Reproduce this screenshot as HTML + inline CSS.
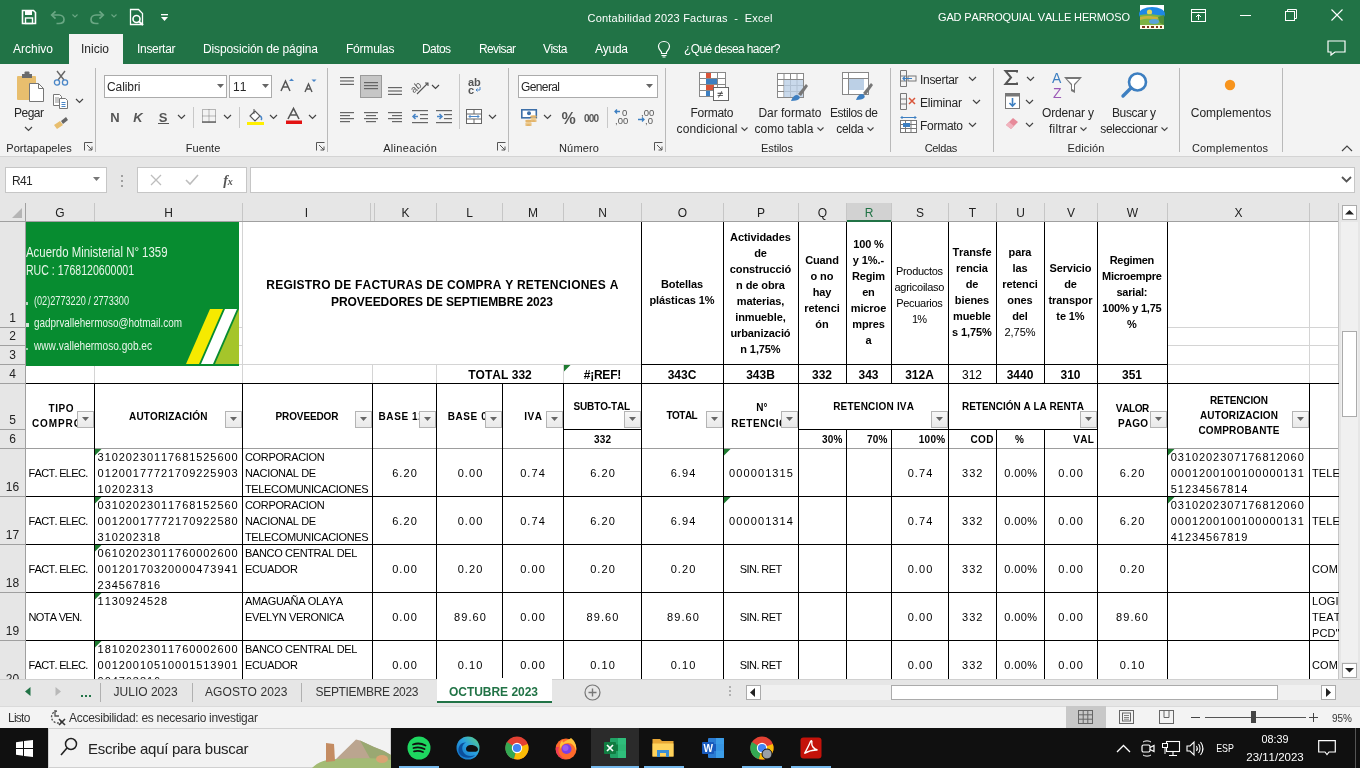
<!DOCTYPE html><html><head><meta charset="utf-8"><style>
html,body{margin:0;padding:0;}
body{width:1360px;height:768px;position:relative;overflow:hidden;background:#fff;font-family:"Liberation Sans",sans-serif;font-kerning:none;}
.a{position:absolute;}
.t{white-space:pre;}
#w{position:absolute;left:0;top:0;width:1360px;height:768px;overflow:hidden;will-change:transform;}
svg{overflow:visible;}
</style></head><body><div id="w">
<div class="a" style="left:0px;top:0px;width:1360px;height:64px;background:#217346;"></div>
<svg class="a" style="left:21px;top:9px;" width="16" height="16" viewBox="0 0 16 16"><path d="M1.5 1.5h11l2 2v11h-13z" fill="none" stroke="#fff" stroke-width="1.6"/><rect x="4" y="1.5" width="7" height="4.5" fill="#fff"/><rect x="4.5" y="9" width="7" height="5.5" fill="none" stroke="#fff" stroke-width="1.4"/></svg>
<svg class="a" style="left:50px;top:10px;" width="16" height="14" viewBox="0 0 16 14"><path d="M2 5 H9 C12 5 14 7 14 9.5 C14 12 12 13.5 9 13.5 H6.5" fill="none" stroke="#6aa784" stroke-width="1.7"/><path d="M5.5 1.3 L1.7 5 L5.5 8.7" fill="none" stroke="#6aa784" stroke-width="1.7"/></svg>
<svg class="a" style="left:72px;top:14px;" width="6" height="4" viewBox="0 0 6 4"><path d="M0.5 0.5 L3 3 L5.5 0.5" fill="none" stroke="#6aa784" stroke-width="1.1"/></svg>
<svg class="a" style="left:89px;top:10px;" width="16" height="14" viewBox="0 0 16 14"><path d="M14 5 H7 C4 5 2 7 2 9.5 C2 12 4 13.5 7 13.5 H9.5" fill="none" stroke="#6aa784" stroke-width="1.7"/><path d="M10.5 1.3 L14.3 5 L10.5 8.7" fill="none" stroke="#6aa784" stroke-width="1.7"/></svg>
<svg class="a" style="left:111px;top:14px;" width="6" height="4" viewBox="0 0 6 4"><path d="M0.5 0.5 L3 3 L5.5 0.5" fill="none" stroke="#6aa784" stroke-width="1.1"/></svg>
<svg class="a" style="left:129px;top:8px;" width="17" height="18" viewBox="0 0 17 18"><path d="M1.5 1.5h8l4 4v11h-12z" fill="none" stroke="#fff" stroke-width="1.3"/><circle cx="7.5" cy="11" r="3.5" fill="none" stroke="#fff" stroke-width="1.6"/><path d="M10 13.5 L14 17" stroke="#fff" stroke-width="2"/></svg>
<svg class="a" style="left:160px;top:13px;" width="9" height="9" viewBox="0 0 9 9"><rect x="1" y="1" width="7" height="1.3" fill="#fff"/><path d="M1 4 h7 l-3.5 4z" fill="#fff"/></svg>
<div class="a t" style="top:13px;font-size:11px;line-height:11px;color:#fff;letter-spacing:0.22px;left:280.11px;width:800px;text-align:center;">Contabilidad 2023 Facturas  -  Excel</div>
<div class="a t" style="top:12px;font-size:11px;line-height:11px;color:#fff;letter-spacing:-0.156px;left:938px;">GAD PARROQUIAL VALLE HERMOSO</div>
<svg class="a" style="left:1140px;top:5px;" width="24" height="24" viewBox="0 0 24 24"><rect width="24" height="24" fill="#fff"/><ellipse cx="12" cy="9" rx="13" ry="7" fill="#1e88e5"/><circle cx="9.5" cy="7" r="2.6" fill="#e3d55a"/><path d="M0 10 C6 8.5 14 9 24 11 V20 H0z" fill="#7cb342"/><path d="M0 12 C6 10.5 12 11 19 12.5 L17 14.5 C10 13.5 5 13.5 0 15z" fill="#c9b33a"/><ellipse cx="14" cy="16.5" rx="5" ry="2.5" fill="#5aa4d8"/><path d="M18 12 L24 10 V20 L20 18z" fill="#4f8f3a"/><rect x="0" y="20" width="24" height="4" fill="#fffbe6"/><path d="M2 21h3v2H2z M7 21h2v2H7z M11 21h3v2h-3z M16 21h2v2h-2z M20 21h2v2h-2z" fill="#7a3a1a"/></svg>
<svg class="a" style="left:1191px;top:9px;" width="15" height="13" viewBox="0 0 15 13"><rect x="0.5" y="0.5" width="14" height="12" fill="none" stroke="#fff"/><path d="M0.5 3.5h14" stroke="#fff"/><path d="M7.5 11 V6 M5 8 L7.5 5.5 L10 8" fill="none" stroke="#fff"/></svg>
<div class="a" style="left:1240px;top:15px;width:11px;height:1px;background:#fff;"></div>
<svg class="a" style="left:1285px;top:9px;" width="12" height="12" viewBox="0 0 12 12"><rect x="0.5" y="2.5" width="9" height="9" fill="none" stroke="#fff"/><path d="M2.5 2.5 V0.5 H11.5 V9.5 H9.5" fill="none" stroke="#fff"/></svg>
<svg class="a" style="left:1331px;top:9px;" width="12" height="12" viewBox="0 0 12 12"><path d="M0.5 0.5 L11.5 11.5 M11.5 0.5 L0.5 11.5" stroke="#fff" stroke-width="1.1"/></svg>
<div class="a" style="left:69px;top:34px;width:54px;height:30px;background:#f3f3f3;"></div>
<div class="a t" style="top:43px;font-size:12px;line-height:12px;color:#fff;left:13px;">Archivo</div>
<div class="a t" style="top:43px;font-size:12px;line-height:12px;color:#262626;left:81px;">Inicio</div>
<div class="a t" style="top:43px;font-size:12px;line-height:12px;color:#fff;letter-spacing:-0.312px;left:137px;">Insertar</div>
<div class="a t" style="top:43px;font-size:12px;line-height:12px;color:#fff;letter-spacing:-0.121px;left:203px;">Disposición de página</div>
<div class="a t" style="top:43px;font-size:12px;line-height:12px;color:#fff;letter-spacing:-0.216px;left:346px;">Fórmulas</div>
<div class="a t" style="top:43px;font-size:12px;line-height:12px;color:#fff;letter-spacing:-0.587px;left:422px;">Datos</div>
<div class="a t" style="top:43px;font-size:12px;line-height:12px;color:#fff;letter-spacing:-0.613px;left:479px;">Revisar</div>
<div class="a t" style="top:43px;font-size:12px;line-height:12px;color:#fff;letter-spacing:-0.544px;left:543px;">Vista</div>
<div class="a t" style="top:43px;font-size:12px;line-height:12px;color:#fff;letter-spacing:-0.256px;left:595px;">Ayuda</div>
<div class="a t" style="top:43px;font-size:12px;line-height:12px;color:#fff;letter-spacing:-0.598px;left:684px;">¿Qué desea hacer?</div>
<svg class="a" style="left:657px;top:40px;" width="14" height="18" viewBox="0 0 14 18"><path d="M7 1.5 C3.5 1.5 1.5 4 1.5 6.5 C1.5 9 3.5 10.5 4.5 12 V13.5 H9.5 V12 C10.5 10.5 12.5 9 12.5 6.5 C12.5 4 10.5 1.5 7 1.5z" fill="none" stroke="#fff" stroke-width="1.2"/><path d="M4.5 15.5h5 M5.5 17h3" stroke="#fff" stroke-width="1.1"/></svg>
<svg class="a" style="left:1327px;top:40px;" width="19" height="16" viewBox="0 0 19 16"><path d="M1 1h17v11H8l-4 3v-3H1z" fill="none" stroke="#fff" stroke-width="1.2"/></svg>
<div class="a" style="left:0px;top:64px;width:1360px;height:92px;background:#f3f3f3;"></div>
<div class="a" style="left:0px;top:156px;width:1360px;height:1px;background:#d4d4d4;"></div>
<div class="a" style="left:95px;top:68px;width:1px;height:84px;background:#b9b9b9;"></div>
<div class="a" style="left:327px;top:68px;width:1px;height:84px;background:#b9b9b9;"></div>
<div class="a" style="left:508px;top:68px;width:1px;height:84px;background:#b9b9b9;"></div>
<div class="a" style="left:665px;top:68px;width:1px;height:84px;background:#b9b9b9;"></div>
<div class="a" style="left:890px;top:68px;width:1px;height:84px;background:#b9b9b9;"></div>
<div class="a" style="left:993px;top:68px;width:1px;height:84px;background:#b9b9b9;"></div>
<div class="a" style="left:1179px;top:68px;width:1px;height:84px;background:#b9b9b9;"></div>
<div class="a" style="left:1282px;top:68px;width:1px;height:84px;background:#b9b9b9;"></div>
<div class="a t" style="top:143px;font-size:11px;line-height:11px;color:#262626;letter-spacing:0.052px;left:-360.97px;width:800px;text-align:center;">Portapapeles</div>
<div class="a t" style="top:143px;font-size:11px;line-height:11px;color:#262626;letter-spacing:0.091px;left:-196.95px;width:800px;text-align:center;">Fuente</div>
<div class="a t" style="top:143px;font-size:11px;line-height:11px;color:#262626;letter-spacing:0.316px;left:10.16px;width:800px;text-align:center;">Alineación</div>
<div class="a t" style="top:143px;font-size:11px;line-height:11px;color:#262626;letter-spacing:0.175px;left:179.09px;width:800px;text-align:center;">Número</div>
<div class="a t" style="top:143px;font-size:11px;line-height:11px;color:#262626;letter-spacing:-0.1px;left:376.95px;width:800px;text-align:center;">Estilos</div>
<div class="a t" style="top:143px;font-size:11px;line-height:11px;color:#262626;letter-spacing:-0.308px;left:540.85px;width:800px;text-align:center;">Celdas</div>
<div class="a t" style="top:143px;font-size:11px;line-height:11px;color:#262626;letter-spacing:0.12px;left:686.06px;width:800px;text-align:center;">Edición</div>
<div class="a t" style="top:143px;font-size:11px;line-height:11px;color:#262626;letter-spacing:0.202px;left:830.1px;width:800px;text-align:center;">Complementos</div>
<svg class="a" style="left:84px;top:142px;" width="9" height="9" viewBox="0 0 9 9"><path d="M0.5 8.5 V0.5 H8.5" fill="none" stroke="#555"/><path d="M3 3 L8 8 M8 4.5 V8 H4.5" fill="none" stroke="#555"/></svg>
<svg class="a" style="left:316px;top:142px;" width="9" height="9" viewBox="0 0 9 9"><path d="M0.5 8.5 V0.5 H8.5" fill="none" stroke="#555"/><path d="M3 3 L8 8 M8 4.5 V8 H4.5" fill="none" stroke="#555"/></svg>
<svg class="a" style="left:497px;top:142px;" width="9" height="9" viewBox="0 0 9 9"><path d="M0.5 8.5 V0.5 H8.5" fill="none" stroke="#555"/><path d="M3 3 L8 8 M8 4.5 V8 H4.5" fill="none" stroke="#555"/></svg>
<svg class="a" style="left:654px;top:142px;" width="9" height="9" viewBox="0 0 9 9"><path d="M0.5 8.5 V0.5 H8.5" fill="none" stroke="#555"/><path d="M3 3 L8 8 M8 4.5 V8 H4.5" fill="none" stroke="#555"/></svg>
<svg class="a" style="left:1341px;top:145px;" width="12" height="7" viewBox="0 0 12 7"><path d="M1 6 L6 1 L11 6" fill="none" stroke="#444" stroke-width="1.2"/></svg>
<svg class="a" style="left:16px;top:71px;" width="30" height="32" viewBox="0 0 30 32"><rect x="1" y="5" width="19" height="24" rx="1" fill="#e8be6e"/><rect x="6" y="3" width="10" height="4" fill="#6b6b6b"/><rect x="8.5" y="0.5" width="5" height="3" rx="1" fill="#6b6b6b"/><path d="M13.5 12.5 h9 l5 5 v13 h-14z" fill="#fff" stroke="#777"/><path d="M22.5 12.5 v5 h5" fill="none" stroke="#777"/></svg>
<div class="a t" style="top:107px;font-size:12px;line-height:12px;color:#262626;letter-spacing:-0.505px;left:-371.25px;width:800px;text-align:center;">Pegar</div>
<svg class="a" style="left:24px;top:126px;" width="9" height="6" viewBox="0 0 9 6"><path d="M1 1 L4.5 4.5 L8 1" fill="none" stroke="#444" stroke-width="1.2"/></svg>
<svg class="a" style="left:53px;top:70px;" width="16" height="16" viewBox="0 0 16 16"><path d="M4 1 L11 10 M12 1 L5 10" stroke="#666" stroke-width="1.4"/><circle cx="4" cy="12.5" r="2.6" fill="none" stroke="#4a86c7" stroke-width="1.3"/><circle cx="12" cy="12.5" r="2.6" fill="none" stroke="#4a86c7" stroke-width="1.3"/></svg>
<svg class="a" style="left:53px;top:94px;" width="16" height="15" viewBox="0 0 16 15"><path d="M0.5 0.5h6l2 2v9h-8z" fill="#fff" stroke="#777"/><path d="M2 4h4M2 6h4M2 8h4" stroke="#777" stroke-width="0.8"/><path d="M6.5 4.5h6l2 2v8h-8z" fill="#fff" stroke="#777"/><path d="M8.5 8.5h4M8.5 10.5h4M8.5 12.5h4" stroke="#4a86c7" stroke-width="1"/></svg>
<svg class="a" style="left:75px;top:98px;" width="9" height="6" viewBox="0 0 9 6"><path d="M1 1 L4.5 4.5 L8 1" fill="none" stroke="#444" stroke-width="1.2"/></svg>
<svg class="a" style="left:53px;top:116px;" width="16" height="14" viewBox="0 0 16 14"><path d="M1 9 L7 5 L10 9 L4 13z" fill="#e8be6e"/><path d="M8 5 L13 1 L15 4 L10 8z" fill="#666"/></svg>
<div class="a" style="left:104px;top:75px;width:123px;height:23px;background:#fff;box-sizing:border-box;border:1px solid #ababab;"></div>
<div class="a t" style="top:81px;font-size:12px;line-height:12px;color:#262626;letter-spacing:-0.085px;left:107px;">Calibri</div>
<svg class="a" style="left:217px;top:84px;" width="8" height="5" viewBox="0 0 8 5"><path d="M0 0h7l-3.5 4z" fill="#666"/></svg>
<div class="a" style="left:229px;top:75px;width:43px;height:23px;background:#fff;box-sizing:border-box;border:1px solid #ababab;"></div>
<div class="a t" style="top:81px;font-size:12px;line-height:12px;color:#262626;left:233px;">11</div>
<svg class="a" style="left:262px;top:84px;" width="8" height="5" viewBox="0 0 8 5"><path d="M0 0h7l-3.5 4z" fill="#666"/></svg>
<svg class="a" style="left:280px;top:78px;" width="14" height="14" viewBox="0 0 14 14"><path d="M1 13 L5.5 3 L10 13 M3 9h5" fill="none" stroke="#555" stroke-width="1.5"/><path d="M9 3 h5 l-2.5 -2.5z" fill="#4a86c7"/></svg>
<svg class="a" style="left:303px;top:79px;" width="14" height="14" viewBox="0 0 14 14"><path d="M2 13 L5.5 5 L9 13 M3.5 10h4" fill="none" stroke="#555" stroke-width="1.4"/><path d="M8.5 0.5 h5 l-2.5 2.5z" fill="#4a86c7"/></svg>
<div class="a t" style="top:111px;font-size:13px;line-height:13px;font-weight:700;color:#555;left:-285.0px;width:800px;text-align:center;">N</div>
<div class="a t" style="top:111px;font-size:13px;line-height:13px;font-weight:700;color:#555;left:-262.0px;width:800px;text-align:center;font-style:italic;">K</div>
<div class="a t" style="top:111px;font-size:13px;line-height:13px;font-weight:700;color:#555;left:-237.0px;width:800px;text-align:center;">S</div>
<div class="a" style="left:158px;top:123px;width:11px;height:1px;background:#555;"></div>
<svg class="a" style="left:177px;top:114px;" width="9" height="6" viewBox="0 0 9 6"><path d="M1 1 L4.5 4.5 L8 1" fill="none" stroke="#444" stroke-width="1.2"/></svg>
<svg class="a" style="left:223px;top:114px;" width="9" height="6" viewBox="0 0 9 6"><path d="M1 1 L4.5 4.5 L8 1" fill="none" stroke="#444" stroke-width="1.2"/></svg>
<svg class="a" style="left:269px;top:114px;" width="9" height="6" viewBox="0 0 9 6"><path d="M1 1 L4.5 4.5 L8 1" fill="none" stroke="#444" stroke-width="1.2"/></svg>
<svg class="a" style="left:308px;top:114px;" width="9" height="6" viewBox="0 0 9 6"><path d="M1 1 L4.5 4.5 L8 1" fill="none" stroke="#444" stroke-width="1.2"/></svg>
<div class="a" style="left:193px;top:107px;width:1px;height:21px;background:#c8c8c8;"></div>
<div class="a" style="left:239px;top:107px;width:1px;height:21px;background:#c8c8c8;"></div>
<svg class="a" style="left:202px;top:109px;" width="14" height="14" viewBox="0 0 14 14"><path d="M0.5 0.5h13v13h-13z M7 0.5v13 M0.5 7h13" fill="none" stroke="#777" stroke-dasharray="1 1"/><path d="M0 13h14" stroke="#666" stroke-width="1.5"/></svg>
<svg class="a" style="left:246px;top:108px;" width="18" height="17" viewBox="0 0 18 17"><path d="M4 8 L9 3 L14 8 L9 13z" fill="#fff" stroke="#555" stroke-width="1.1"/><path d="M8 1 V6" stroke="#555"/><path d="M14 8 C16 9 16 11 15 12" fill="none" stroke="#4a86c7" stroke-width="1.5"/><rect x="1" y="14" width="17" height="3" fill="#ffef00"/></svg>
<svg class="a" style="left:285px;top:107px;" width="18" height="18" viewBox="0 0 18 18"><path d="M3 12 L8.5 1.5 L14 12 M5.2 8h6.6" fill="none" stroke="#555" stroke-width="1.6"/><rect x="1" y="13.5" width="16" height="3.5" fill="#e21212"/></svg>
<svg class="a" style="left:340px;top:77px;" width="16" height="11.2" viewBox="0 0 16 11.2"><rect x="0" y="0.0" width="14" height="1.2" fill="#666"/><rect x="0" y="3.4" width="14" height="1.2" fill="#666"/><rect x="0" y="6.8" width="14" height="1.2" fill="#666"/></svg>
<div class="a" style="left:360px;top:75px;width:22px;height:23px;background:#c6c6c6;box-sizing:border-box;border:1px solid #9a9a9a;"></div>
<svg class="a" style="left:364px;top:82px;" width="16" height="10" viewBox="0 0 16 10"><rect x="0" y="0" width="14" height="1.2" fill="#666"/><rect x="0" y="3" width="14" height="1.2" fill="#666"/><rect x="0" y="6" width="14" height="1.2" fill="#666"/></svg>
<svg class="a" style="left:388px;top:87px;" width="16" height="11.2" viewBox="0 0 16 11.2"><rect x="0" y="0.0" width="14" height="1.2" fill="#666"/><rect x="0" y="3.4" width="14" height="1.2" fill="#666"/><rect x="0" y="6.8" width="14" height="1.2" fill="#666"/></svg>
<svg class="a" style="left:411px;top:78px;" width="22" height="18" viewBox="0 0 22 18"><text x="0" y="12" font-size="10" font-family="Liberation Sans" fill="#555" transform="rotate(-40 6 10)">ab</text><path d="M6 16 L17 5 M14 5 h3 v3" fill="none" stroke="#555" stroke-width="1.1"/></svg>
<svg class="a" style="left:431px;top:84px;" width="9" height="6" viewBox="0 0 9 6"><path d="M1 1 L4.5 4.5 L8 1" fill="none" stroke="#444" stroke-width="1.2"/></svg>
<svg class="a" style="left:340px;top:112px;" width="16" height="13" viewBox="0 0 16 13"><rect x="0" y="0" width="14" height="1.2" fill="#666"/><rect x="0" y="3" width="10" height="1.2" fill="#666"/><rect x="0" y="6" width="14" height="1.2" fill="#666"/><rect x="0" y="9" width="10" height="1.2" fill="#666"/></svg>
<svg class="a" style="left:364px;top:112px;" width="16" height="13" viewBox="0 0 16 13"><rect x="0" y="0" width="14" height="1.2" fill="#666"/><rect x="2" y="3" width="10" height="1.2" fill="#666"/><rect x="0" y="6" width="14" height="1.2" fill="#666"/><rect x="2" y="9" width="10" height="1.2" fill="#666"/></svg>
<svg class="a" style="left:388px;top:112px;" width="16" height="13" viewBox="0 0 16 13"><rect x="0" y="0" width="14" height="1.2" fill="#666"/><rect x="4" y="3" width="10" height="1.2" fill="#666"/><rect x="0" y="6" width="14" height="1.2" fill="#666"/><rect x="4" y="9" width="10" height="1.2" fill="#666"/></svg>
<svg class="a" style="left:412px;top:109px;" width="16" height="16" viewBox="0 0 16 16"><rect x="0" y="1" width="16" height="1.2" fill="#666"/><rect x="8" y="5" width="8" height="1.2" fill="#666"/><rect x="8" y="9" width="8" height="1.2" fill="#666"/><rect x="0" y="13" width="16" height="1.2" fill="#666"/><path d="M6 7.5 H1 M3.5 5 L1 7.5 L3.5 10" fill="none" stroke="#4a86c7" stroke-width="1.5"/></svg>
<svg class="a" style="left:436px;top:109px;" width="16" height="16" viewBox="0 0 16 16"><rect x="0" y="1" width="16" height="1.2" fill="#666"/><rect x="8" y="5" width="8" height="1.2" fill="#666"/><rect x="8" y="9" width="8" height="1.2" fill="#666"/><rect x="0" y="13" width="16" height="1.2" fill="#666"/><path d="M1 7.5 H6 M3.5 5 L6 7.5 L3.5 10" fill="none" stroke="#4a86c7" stroke-width="1.5"/></svg>
<div class="a" style="left:459px;top:74px;width:1px;height:55px;background:#c8c8c8;"></div>
<svg class="a" style="left:468px;top:77px;" width="16" height="17" viewBox="0 0 16 17"><text x="0" y="8.5" font-size="11" font-weight="bold" font-family="Liberation Sans" fill="#555">ab</text><text x="0" y="16.5" font-size="11" font-weight="bold" font-family="Liberation Sans" fill="#555">c</text><path d="M12 10 V13 H8 M9.5 11.5 L8 13 L9.5 14.5" fill="none" stroke="#4a86c7"/></svg>
<svg class="a" style="left:466px;top:109px;" width="16" height="15" viewBox="0 0 16 15"><rect x="0.5" y="0.5" width="15" height="14" fill="#fff" stroke="#666"/><path d="M0.5 5h15 M0.5 10h15 M8 0.5v4.5 M8 10v4.5" stroke="#666"/><path d="M3 7.5 h10 M4.5 6 L3 7.5 L4.5 9 M11.5 6 L13 7.5 L11.5 9" fill="none" stroke="#4a86c7"/></svg>
<svg class="a" style="left:488px;top:114px;" width="9" height="6" viewBox="0 0 9 6"><path d="M1 1 L4.5 4.5 L8 1" fill="none" stroke="#444" stroke-width="1.2"/></svg>
<div class="a" style="left:518px;top:75px;width:140px;height:23px;background:#fff;box-sizing:border-box;border:1px solid #ababab;"></div>
<div class="a t" style="top:81px;font-size:12px;line-height:12px;color:#262626;letter-spacing:-0.615px;left:521px;">General</div>
<svg class="a" style="left:646px;top:84px;" width="8" height="5" viewBox="0 0 8 5"><path d="M0 0h7l-3.5 4z" fill="#666"/></svg>
<svg class="a" style="left:520px;top:108px;" width="18" height="18" viewBox="0 0 18 18"><rect x="1.8" y="1.8" width="14.5" height="8" fill="#fff" stroke="#3d6fa8" stroke-width="1.6"/><circle cx="9" cy="5.2" r="2" fill="#3d6fa8"/><ellipse cx="13.5" cy="8.5" rx="3.3" ry="1.3" fill="#e3b46a"/><ellipse cx="13.5" cy="10.8" rx="3.3" ry="1.2" fill="#ecc98e"/><ellipse cx="13.5" cy="13" rx="3.3" ry="1.1" fill="#e3b46a"/><ellipse cx="8.5" cy="13" rx="3.3" ry="1.3" fill="#e3b46a"/><ellipse cx="8.5" cy="15.2" rx="3.3" ry="1.2" fill="#ecc98e"/><ellipse cx="8.5" cy="17" rx="3.3" ry="1.1" fill="#e3b46a"/></svg>
<svg class="a" style="left:543px;top:114px;" width="9" height="6" viewBox="0 0 9 6"><path d="M1 1 L4.5 4.5 L8 1" fill="none" stroke="#444" stroke-width="1.2"/></svg>
<div class="a t" style="top:111px;font-size:16px;line-height:16px;font-weight:700;color:#555;letter-spacing:-1.227px;left:167.89px;width:800px;text-align:center;">%</div>
<div class="a t" style="top:114px;font-size:10px;line-height:10px;font-weight:700;color:#555;letter-spacing:-0.842px;left:191.08px;width:800px;text-align:center;">000</div>
<div class="a" style="left:607px;top:107px;width:1px;height:21px;background:#c8c8c8;"></div>
<svg class="a" style="left:614px;top:108px;" width="16" height="16" viewBox="0 0 16 16"><text x="8" y="8" font-size="9.5" font-family="Liberation Sans" fill="#555">0</text><text x="1" y="16" font-size="9.5" font-family="Liberation Sans" fill="#555">,00</text><path d="M6 3.5 H1 M3 1.5 L1 3.5 L3 5.5" fill="none" stroke="#3d7fc1" stroke-width="1.3"/></svg>
<svg class="a" style="left:637px;top:108px;" width="16" height="16" viewBox="0 0 16 16"><text x="4" y="8" font-size="9.5" font-family="Liberation Sans" fill="#555">,00</text><text x="8" y="16" font-size="9.5" font-family="Liberation Sans" fill="#555">,0</text><path d="M1 11.5 H7 M5 9.5 L7 11.5 L5 13.5" fill="none" stroke="#3d7fc1" stroke-width="1.3"/></svg>
<svg class="a" style="left:699px;top:72px;" width="30" height="30" viewBox="0 0 30 30"><rect x="0.5" y="0.5" width="26" height="24" fill="#fff" stroke="#888"/><path d="M0.5 6.5h26" stroke="#888"/><path d="M0.5 12.5h26" stroke="#888"/><path d="M0.5 18.5h26" stroke="#888"/><path d="M9.5 0.5v24" stroke="#888"/><path d="M18.5 0.5v24" stroke="#888"/><rect x="7" y="1" width="5" height="5" fill="#d9553a"/><rect x="7" y="7" width="11" height="5" fill="#3d7fc1"/><rect x="7" y="13" width="8" height="5" fill="#d9553a"/><rect x="7" y="19" width="4" height="5" fill="#3d7fc1"/><rect x="14.5" y="15.5" width="15" height="13" fill="#fff" stroke="#666"/><text x="18" y="26" font-size="11" font-family="Liberation Sans" fill="#333">≠</text></svg>
<svg class="a" style="left:777px;top:73px;" width="32" height="30" viewBox="0 0 32 30"><rect x="0.5" y="0.5" width="26" height="24" fill="#fff" stroke="#888"/><path d="M0.5 6.5h26" stroke="#888"/><path d="M0.5 12.5h26" stroke="#888"/><path d="M0.5 18.5h26" stroke="#888"/><path d="M7.0 0.5v24" stroke="#888"/><path d="M13.5 0.5v24" stroke="#888"/><path d="M20.0 0.5v24" stroke="#888"/><rect x="7" y="7" width="19" height="17" fill="#bcd0e6" opacity="0.8"/><path d="M14 28 C16 22 20 21 22 23 C24 25 22 28 14 28z" fill="#3d7fc1"/><path d="M21 21 L29 11 L31 13 L24 23z" fill="#777"/></svg>
<svg class="a" style="left:842px;top:72px;" width="32" height="30" viewBox="0 0 32 30"><rect x="0.5" y="0.5" width="26" height="22" fill="#fff" stroke="#888"/><rect x="6" y="6" width="16" height="12" fill="#bcd0e6"/><path d="M0.5 6.5h26 M6.5 0.5v22" stroke="#888"/><path d="M14 28 C16 22 20 21 22 23 C24 25 22 28 14 28z" fill="#3d7fc1"/><path d="M21 21 L29 11 L31 13 L24 23z" fill="#777"/></svg>
<div class="a t" style="top:107px;font-size:12px;line-height:12px;color:#262626;letter-spacing:-0.28px;left:311.86px;width:800px;text-align:center;">Formato</div>
<div class="a t" style="top:123px;font-size:12px;line-height:12px;color:#262626;letter-spacing:0.076px;left:307.04px;width:800px;text-align:center;">condicional</div>
<div class="a t" style="top:107px;font-size:12px;line-height:12px;color:#262626;letter-spacing:-0.035px;left:389.98px;width:800px;text-align:center;">Dar formato</div>
<div class="a t" style="top:123px;font-size:12px;line-height:12px;color:#262626;letter-spacing:0.011px;left:384.01px;width:800px;text-align:center;">como tabla</div>
<div class="a t" style="top:107px;font-size:12px;line-height:12px;color:#262626;letter-spacing:-0.447px;left:453.78px;width:800px;text-align:center;">Estilos de</div>
<div class="a t" style="top:123px;font-size:12px;line-height:12px;color:#262626;letter-spacing:-0.297px;left:449.85px;width:800px;text-align:center;">celda</div>
<svg class="a" style="left:741px;top:127px;" width="7" height="5" viewBox="0 0 7 5"><path d="M0.5 0.5 L3.5 3.5 L6.5 0.5" fill="none" stroke="#444" stroke-width="1.1"/></svg>
<svg class="a" style="left:817px;top:127px;" width="7" height="5" viewBox="0 0 7 5"><path d="M0.5 0.5 L3.5 3.5 L6.5 0.5" fill="none" stroke="#444" stroke-width="1.1"/></svg>
<svg class="a" style="left:867px;top:127px;" width="7" height="5" viewBox="0 0 7 5"><path d="M0.5 0.5 L3.5 3.5 L6.5 0.5" fill="none" stroke="#444" stroke-width="1.1"/></svg>
<svg class="a" style="left:900px;top:70px;" width="17" height="17" viewBox="0 0 17 17"><path d="M0.5 0.5h6v16h-6z M0.5 6h6 M0.5 11h6" fill="none" stroke="#777"/><rect x="8" y="6" width="8" height="5" fill="none" stroke="#777"/><path d="M12 8.5 H3 M5 6.5 L3 8.5 L5 10.5" fill="none" stroke="#3d7fc1" stroke-width="1.2"/></svg>
<div class="a t" style="top:74px;font-size:12px;line-height:12px;color:#262626;letter-spacing:-0.297px;left:920px;">Insertar</div>
<svg class="a" style="left:900px;top:93px;" width="17" height="17" viewBox="0 0 17 17"><path d="M0.5 0.5h6v16h-6z M0.5 6h6 M0.5 11h6" fill="none" stroke="#777"/><path d="M9 5 L15 11 M15 5 L9 11" stroke="#d9553a" stroke-width="1.5"/></svg>
<div class="a t" style="top:97px;font-size:12px;line-height:12px;color:#262626;letter-spacing:-0.192px;left:920px;">Eliminar</div>
<svg class="a" style="left:900px;top:116px;" width="17" height="17" viewBox="0 0 17 17"><path d="M0.5 1.5h16 M2 0v3 M15 0v3" stroke="#3d7fc1"/><rect x="0.5" y="4.5" width="16" height="12" fill="#fff" stroke="#777"/><path d="M0.5 8.5h16 M0.5 12.5h16 M5.5 4.5v12 M11 4.5v12" stroke="#777"/><rect x="3" y="7" width="7" height="4" fill="#3d7fc1"/></svg>
<div class="a t" style="top:120px;font-size:12px;line-height:12px;color:#262626;letter-spacing:-0.28px;left:920px;">Formato</div>
<svg class="a" style="left:968px;top:76px;" width="9" height="6" viewBox="0 0 9 6"><path d="M1 1 L4.5 4.5 L8 1" fill="none" stroke="#444" stroke-width="1.2"/></svg>
<svg class="a" style="left:972px;top:99px;" width="9" height="6" viewBox="0 0 9 6"><path d="M1 1 L4.5 4.5 L8 1" fill="none" stroke="#444" stroke-width="1.2"/></svg>
<svg class="a" style="left:968px;top:122px;" width="9" height="6" viewBox="0 0 9 6"><path d="M1 1 L4.5 4.5 L8 1" fill="none" stroke="#444" stroke-width="1.2"/></svg>
<svg class="a" style="left:1004px;top:70px;" width="14" height="15" viewBox="0 0 14 15"><path d="M13 2.5 V1 H1.5 L7 7.5 L1.5 14 H13 V12.5" fill="none" stroke="#555" stroke-width="2"/></svg>
<svg class="a" style="left:1005px;top:93px;" width="15" height="16" viewBox="0 0 15 16"><rect x="0.5" y="0.5" width="14" height="15" fill="#fff" stroke="#777"/><rect x="0.5" y="0.5" width="14" height="3" fill="#777"/><path d="M7.5 5 V13 M4.5 10 L7.5 13 L10.5 10" fill="none" stroke="#3d7fc1" stroke-width="1.6"/></svg>
<svg class="a" style="left:1005px;top:117px;" width="15" height="12" viewBox="0 0 15 12"><path d="M1 8 L8 1 L13 5 L6 12z" fill="#e78a9a"/><path d="M1 8 L4 5 L9 9 L6 12z" fill="#f0b3be"/></svg>
<svg class="a" style="left:1026px;top:76px;" width="9" height="6" viewBox="0 0 9 6"><path d="M1 1 L4.5 4.5 L8 1" fill="none" stroke="#444" stroke-width="1.2"/></svg>
<svg class="a" style="left:1025px;top:99px;" width="9" height="6" viewBox="0 0 9 6"><path d="M1 1 L4.5 4.5 L8 1" fill="none" stroke="#444" stroke-width="1.2"/></svg>
<svg class="a" style="left:1025px;top:122px;" width="9" height="6" viewBox="0 0 9 6"><path d="M1 1 L4.5 4.5 L8 1" fill="none" stroke="#444" stroke-width="1.2"/></svg>
<svg class="a" style="left:1052px;top:71px;" width="32" height="29" viewBox="0 0 32 29"><text x="0" y="12" font-size="14" font-family="Liberation Sans" fill="#3d7fc1">A</text><text x="1" y="27" font-size="14" font-family="Liberation Sans" fill="#9b59b6">Z</text><path d="M12 6 H30 L23 14 V22 L19 20 V14z" fill="#777"/><path d="M15 8 H27 L22 13 V19 L20 18 V13z" fill="#fff"/></svg>
<div class="a t" style="top:107px;font-size:12px;line-height:12px;color:#262626;letter-spacing:-0.169px;left:667.92px;width:800px;text-align:center;">Ordenar y</div>
<div class="a t" style="top:123px;font-size:12px;line-height:12px;color:#262626;letter-spacing:0.222px;left:663.11px;width:800px;text-align:center;">filtrar</div>
<svg class="a" style="left:1120px;top:71px;" width="29" height="29" viewBox="0 0 29 29"><circle cx="17.5" cy="11" r="8.5" fill="#fff" stroke="#3d7fc1" stroke-width="2.6"/><path d="M11 17 L3 25" stroke="#3d7fc1" stroke-width="3.4" stroke-linecap="round"/></svg>
<div class="a t" style="top:107px;font-size:12px;line-height:12px;color:#262626;letter-spacing:-0.383px;left:733.81px;width:800px;text-align:center;">Buscar y</div>
<div class="a t" style="top:123px;font-size:12px;line-height:12px;color:#262626;letter-spacing:-0.33px;left:728.84px;width:800px;text-align:center;">seleccionar</div>
<svg class="a" style="left:1080px;top:127px;" width="7" height="5" viewBox="0 0 7 5"><path d="M0.5 0.5 L3.5 3.5 L6.5 0.5" fill="none" stroke="#444" stroke-width="1.1"/></svg>
<svg class="a" style="left:1161px;top:127px;" width="7" height="5" viewBox="0 0 7 5"><path d="M0.5 0.5 L3.5 3.5 L6.5 0.5" fill="none" stroke="#444" stroke-width="1.1"/></svg>
<svg class="a" style="left:1224px;top:79px;" width="12" height="12" viewBox="0 0 12 12"><circle cx="6" cy="6" r="5.2" fill="#f7941d"/></svg>
<div class="a t" style="top:107px;font-size:12px;line-height:12px;color:#262626;letter-spacing:-0.036px;left:830.98px;width:800px;text-align:center;">Complementos</div>
<div class="a" style="left:0px;top:157px;width:1360px;height:46px;background:#e6e6e6;"></div>
<div class="a" style="left:5px;top:167px;width:102px;height:26px;background:#fff;box-sizing:border-box;border:1px solid #c6c6c6;"></div>
<div class="a t" style="top:175px;font-size:12px;line-height:12px;color:#262626;letter-spacing:-0.657px;left:12px;">R41</div>
<svg class="a" style="left:93px;top:177px;" width="8" height="5" viewBox="0 0 8 5"><path d="M0 0h7l-3.5 4z" fill="#777"/></svg>
<div class="a" style="left:121px;top:175px;width:2px;height:2px;background:#a0a0a0;"></div>
<div class="a" style="left:121px;top:180px;width:2px;height:2px;background:#a0a0a0;"></div>
<div class="a" style="left:121px;top:185px;width:2px;height:2px;background:#a0a0a0;"></div>
<div class="a" style="left:137px;top:167px;width:110px;height:26px;background:#fff;box-sizing:border-box;border:1px solid #c6c6c6;"></div>
<svg class="a" style="left:150px;top:174px;" width="12" height="12" viewBox="0 0 12 12"><path d="M1 1 L11 11 M11 1 L1 11" stroke="#bdbdbd" stroke-width="1.3"/></svg>
<svg class="a" style="left:185px;top:174px;" width="14" height="12" viewBox="0 0 14 12"><path d="M1 6 L5 10 L13 1" fill="none" stroke="#bdbdbd" stroke-width="1.6"/></svg>
<div class="a t" style="top:174px;font-size:14px;line-height:14px;font-family:'Liberation Serif';font-weight:700;color:#555;left:-172.0px;width:800px;text-align:center;"><i>f</i><span style="font-size:10px"><i>x</i></span></div>
<div class="a" style="left:250px;top:167px;width:1105px;height:26px;background:#fff;box-sizing:border-box;border:1px solid #c6c6c6;"></div>
<svg class="a" style="left:1341px;top:176px;" width="11" height="7" viewBox="0 0 11 7"><path d="M1 1 L5.5 5.5 L10 1" fill="none" stroke="#555" stroke-width="1.8"/></svg>
<div class="a" style="left:0px;top:203px;width:1339px;height:18px;background:#e6e6e6;"></div>
<div class="a" style="left:847px;top:203px;width:44px;height:18px;background:#d2d2d2;"></div>
<div class="a" style="left:0px;top:221px;width:1339px;height:1px;background:#a0a0a0;"></div>
<div class="a" style="left:847px;top:220px;width:44px;height:2px;background:#217346;"></div>
<div class="a" style="left:25px;top:203px;width:1px;height:18px;background:#c6c6c6;"></div>
<div class="a" style="left:94px;top:203px;width:1px;height:18px;background:#c6c6c6;"></div>
<div class="a" style="left:242px;top:203px;width:1px;height:18px;background:#c6c6c6;"></div>
<div class="a" style="left:370px;top:203px;width:1px;height:18px;background:#c6c6c6;"></div>
<div class="a" style="left:374px;top:203px;width:1px;height:18px;background:#c6c6c6;"></div>
<div class="a" style="left:436px;top:203px;width:1px;height:18px;background:#c6c6c6;"></div>
<div class="a" style="left:502px;top:203px;width:1px;height:18px;background:#c6c6c6;"></div>
<div class="a" style="left:563px;top:203px;width:1px;height:18px;background:#c6c6c6;"></div>
<div class="a" style="left:641px;top:203px;width:1px;height:18px;background:#c6c6c6;"></div>
<div class="a" style="left:723px;top:203px;width:1px;height:18px;background:#c6c6c6;"></div>
<div class="a" style="left:798px;top:203px;width:1px;height:18px;background:#c6c6c6;"></div>
<div class="a" style="left:846px;top:203px;width:1px;height:18px;background:#c6c6c6;"></div>
<div class="a" style="left:891px;top:203px;width:1px;height:18px;background:#c6c6c6;"></div>
<div class="a" style="left:948px;top:203px;width:1px;height:18px;background:#c6c6c6;"></div>
<div class="a" style="left:996px;top:203px;width:1px;height:18px;background:#c6c6c6;"></div>
<div class="a" style="left:1044px;top:203px;width:1px;height:18px;background:#c6c6c6;"></div>
<div class="a" style="left:1097px;top:203px;width:1px;height:18px;background:#c6c6c6;"></div>
<div class="a" style="left:1167px;top:203px;width:1px;height:18px;background:#c6c6c6;"></div>
<div class="a" style="left:1309px;top:203px;width:1px;height:18px;background:#c6c6c6;"></div>
<svg class="a" style="left:11px;top:207px;" width="12" height="12" viewBox="0 0 12 12"><path d="M11 1 V11 H1z" fill="#b5b5b5"/></svg>
<div class="a t" style="top:207px;font-size:12px;line-height:12px;color:#222;left:-340.0px;width:800px;text-align:center;">G</div>
<div class="a t" style="top:207px;font-size:12px;line-height:12px;color:#222;left:-231.5px;width:800px;text-align:center;">H</div>
<div class="a t" style="top:207px;font-size:12px;line-height:12px;color:#222;left:-93.5px;width:800px;text-align:center;">I</div>
<div class="a t" style="top:207px;font-size:12px;line-height:12px;color:#222;left:5.5px;width:800px;text-align:center;">K</div>
<div class="a t" style="top:207px;font-size:12px;line-height:12px;color:#222;left:69.5px;width:800px;text-align:center;">L</div>
<div class="a t" style="top:207px;font-size:12px;line-height:12px;color:#222;left:133.0px;width:800px;text-align:center;">M</div>
<div class="a t" style="top:207px;font-size:12px;line-height:12px;color:#222;left:202.5px;width:800px;text-align:center;">N</div>
<div class="a t" style="top:207px;font-size:12px;line-height:12px;color:#222;left:282.5px;width:800px;text-align:center;">O</div>
<div class="a t" style="top:207px;font-size:12px;line-height:12px;color:#222;left:361.0px;width:800px;text-align:center;">P</div>
<div class="a t" style="top:207px;font-size:12px;line-height:12px;color:#222;left:422.5px;width:800px;text-align:center;">Q</div>
<div class="a t" style="top:207px;font-size:12px;line-height:12px;color:#217346;left:469.0px;width:800px;text-align:center;">R</div>
<div class="a t" style="top:207px;font-size:12px;line-height:12px;color:#222;left:520.0px;width:800px;text-align:center;">S</div>
<div class="a t" style="top:207px;font-size:12px;line-height:12px;color:#222;left:572.5px;width:800px;text-align:center;">T</div>
<div class="a t" style="top:207px;font-size:12px;line-height:12px;color:#222;left:620.5px;width:800px;text-align:center;">U</div>
<div class="a t" style="top:207px;font-size:12px;line-height:12px;color:#222;left:671.0px;width:800px;text-align:center;">V</div>
<div class="a t" style="top:207px;font-size:12px;line-height:12px;color:#222;left:732.5px;width:800px;text-align:center;">W</div>
<div class="a t" style="top:207px;font-size:12px;line-height:12px;color:#222;left:838.5px;width:800px;text-align:center;">X</div>
<div class="a" style="left:26px;top:222px;width:1313px;height:457px;background:#fff;"></div>
<div class="a" style="left:0px;top:222px;width:25px;height:457px;background:#e6e6e6;"></div>
<div class="a" style="left:25px;top:203px;width:1px;height:476px;background:#a0a0a0;"></div>
<div class="a" style="left:0px;top:327px;width:25px;height:1px;background:#a0a0a0;"></div>
<div class="a" style="left:26px;top:327px;width:1313px;height:1px;background:#d4d4d4;"></div>
<div class="a t" style="top:312px;font-size:12px;line-height:12px;color:#222;left:-387.5px;width:800px;text-align:center;">1</div>
<div class="a" style="left:0px;top:345px;width:25px;height:1px;background:#a0a0a0;"></div>
<div class="a" style="left:26px;top:345px;width:1313px;height:1px;background:#d4d4d4;"></div>
<div class="a t" style="top:330px;font-size:12px;line-height:12px;color:#222;left:-387.5px;width:800px;text-align:center;">2</div>
<div class="a" style="left:0px;top:364px;width:25px;height:1px;background:#a0a0a0;"></div>
<div class="a" style="left:26px;top:364px;width:1313px;height:1px;background:#d4d4d4;"></div>
<div class="a t" style="top:349px;font-size:12px;line-height:12px;color:#222;left:-387.5px;width:800px;text-align:center;">3</div>
<div class="a" style="left:0px;top:383px;width:25px;height:1px;background:#a0a0a0;"></div>
<div class="a" style="left:26px;top:383px;width:1313px;height:1px;background:#d4d4d4;"></div>
<div class="a t" style="top:368px;font-size:12px;line-height:12px;color:#222;left:-387.5px;width:800px;text-align:center;">4</div>
<div class="a" style="left:0px;top:429px;width:25px;height:1px;background:#a0a0a0;"></div>
<div class="a" style="left:26px;top:429px;width:1313px;height:1px;background:#d4d4d4;"></div>
<div class="a t" style="top:414px;font-size:12px;line-height:12px;color:#222;left:-387.5px;width:800px;text-align:center;">5</div>
<div class="a" style="left:0px;top:448px;width:25px;height:1px;background:#a0a0a0;"></div>
<div class="a" style="left:26px;top:448px;width:1313px;height:1px;background:#9d9d9d;"></div>
<div class="a t" style="top:433px;font-size:12px;line-height:12px;color:#222;left:-387.5px;width:800px;text-align:center;">6</div>
<div class="a" style="left:0px;top:496px;width:25px;height:1px;background:#a0a0a0;"></div>
<div class="a" style="left:26px;top:496px;width:1313px;height:1px;background:#d4d4d4;"></div>
<div class="a t" style="top:481px;font-size:12px;line-height:12px;color:#222;left:-387.5px;width:800px;text-align:center;">16</div>
<div class="a" style="left:0px;top:544px;width:25px;height:1px;background:#a0a0a0;"></div>
<div class="a" style="left:26px;top:544px;width:1313px;height:1px;background:#d4d4d4;"></div>
<div class="a t" style="top:529px;font-size:12px;line-height:12px;color:#222;left:-387.5px;width:800px;text-align:center;">17</div>
<div class="a" style="left:0px;top:592px;width:25px;height:1px;background:#a0a0a0;"></div>
<div class="a" style="left:26px;top:592px;width:1313px;height:1px;background:#d4d4d4;"></div>
<div class="a t" style="top:577px;font-size:12px;line-height:12px;color:#222;left:-387.5px;width:800px;text-align:center;">18</div>
<div class="a" style="left:0px;top:640px;width:25px;height:1px;background:#a0a0a0;"></div>
<div class="a" style="left:26px;top:640px;width:1313px;height:1px;background:#d4d4d4;"></div>
<div class="a t" style="top:625px;font-size:12px;line-height:12px;color:#222;left:-387.5px;width:800px;text-align:center;">19</div>
<div class="a t" style="top:673px;font-size:12px;line-height:12px;color:#222;left:-387.5px;width:800px;text-align:center;">20</div>
<div class="a" style="left:94px;top:222px;width:1px;height:457px;background:#d4d4d4;"></div>
<div class="a" style="left:242px;top:222px;width:1px;height:457px;background:#d4d4d4;"></div>
<div class="a" style="left:372px;top:222px;width:1px;height:457px;background:#d4d4d4;"></div>
<div class="a" style="left:436px;top:222px;width:1px;height:457px;background:#d4d4d4;"></div>
<div class="a" style="left:502px;top:222px;width:1px;height:457px;background:#d4d4d4;"></div>
<div class="a" style="left:563px;top:222px;width:1px;height:457px;background:#d4d4d4;"></div>
<div class="a" style="left:641px;top:222px;width:1px;height:457px;background:#d4d4d4;"></div>
<div class="a" style="left:723px;top:222px;width:1px;height:457px;background:#d4d4d4;"></div>
<div class="a" style="left:798px;top:222px;width:1px;height:457px;background:#d4d4d4;"></div>
<div class="a" style="left:846px;top:222px;width:1px;height:457px;background:#d4d4d4;"></div>
<div class="a" style="left:891px;top:222px;width:1px;height:457px;background:#d4d4d4;"></div>
<div class="a" style="left:948px;top:222px;width:1px;height:457px;background:#d4d4d4;"></div>
<div class="a" style="left:996px;top:222px;width:1px;height:457px;background:#d4d4d4;"></div>
<div class="a" style="left:1044px;top:222px;width:1px;height:457px;background:#d4d4d4;"></div>
<div class="a" style="left:1097px;top:222px;width:1px;height:457px;background:#d4d4d4;"></div>
<div class="a" style="left:1167px;top:222px;width:1px;height:457px;background:#d4d4d4;"></div>
<div class="a" style="left:1309px;top:222px;width:1px;height:457px;background:#d4d4d4;"></div>
<div class="a" style="left:1338px;top:203px;width:1px;height:476px;background:#c6c6c6;"></div>
<div class="a" style="left:243px;top:222px;width:398px;height:142px;background:#fff;"></div>
<div class="a" style="left:642px;top:222px;width:81px;height:142px;background:#fff;"></div>
<div class="a" style="left:724px;top:222px;width:74px;height:142px;background:#fff;"></div>
<div class="a" style="left:799px;top:222px;width:47px;height:142px;background:#fff;"></div>
<div class="a" style="left:847px;top:222px;width:44px;height:142px;background:#fff;"></div>
<div class="a" style="left:892px;top:222px;width:56px;height:142px;background:#fff;"></div>
<div class="a" style="left:949px;top:222px;width:47px;height:142px;background:#fff;"></div>
<div class="a" style="left:997px;top:222px;width:47px;height:142px;background:#fff;"></div>
<div class="a" style="left:1045px;top:222px;width:52px;height:142px;background:#fff;"></div>
<div class="a" style="left:1098px;top:222px;width:69px;height:142px;background:#fff;"></div>
<div class="a" style="left:437px;top:365px;width:126px;height:18px;background:#fff;"></div>
<div class="a" style="left:26px;top:384px;width:68px;height:64px;background:#fff;"></div>
<div class="a" style="left:95px;top:384px;width:147px;height:64px;background:#fff;"></div>
<div class="a" style="left:243px;top:384px;width:129px;height:64px;background:#fff;"></div>
<div class="a" style="left:373px;top:384px;width:63px;height:64px;background:#fff;"></div>
<div class="a" style="left:437px;top:384px;width:65px;height:64px;background:#fff;"></div>
<div class="a" style="left:503px;top:384px;width:60px;height:64px;background:#fff;"></div>
<div class="a" style="left:642px;top:384px;width:81px;height:64px;background:#fff;"></div>
<div class="a" style="left:724px;top:384px;width:74px;height:64px;background:#fff;"></div>
<div class="a" style="left:1098px;top:384px;width:69px;height:64px;background:#fff;"></div>
<div class="a" style="left:1168px;top:384px;width:141px;height:64px;background:#fff;"></div>
<div class="a" style="left:1310px;top:384px;width:28px;height:64px;background:#fff;"></div>
<div class="a" style="left:564px;top:384px;width:77px;height:45px;background:#fff;"></div>
<div class="a" style="left:799px;top:384px;width:149px;height:45px;background:#fff;"></div>
<div class="a" style="left:949px;top:384px;width:148px;height:45px;background:#fff;"></div>
<div class="a" style="left:641px;top:364px;width:527px;height:1px;background:#000;"></div>
<div class="a" style="left:26px;top:383px;width:1313px;height:1px;background:#000;"></div>
<div class="a" style="left:563px;top:429px;width:79px;height:1px;background:#000;"></div>
<div class="a" style="left:798px;top:429px;width:300px;height:1px;background:#000;"></div>
<div class="a" style="left:26px;top:496px;width:1313px;height:1px;background:#000;"></div>
<div class="a" style="left:26px;top:544px;width:1313px;height:1px;background:#000;"></div>
<div class="a" style="left:26px;top:592px;width:1313px;height:1px;background:#000;"></div>
<div class="a" style="left:26px;top:640px;width:1313px;height:1px;background:#000;"></div>
<div class="a" style="left:641px;top:222px;width:1px;height:162px;background:#000;"></div>
<div class="a" style="left:723px;top:222px;width:1px;height:162px;background:#000;"></div>
<div class="a" style="left:798px;top:222px;width:1px;height:162px;background:#000;"></div>
<div class="a" style="left:846px;top:222px;width:1px;height:162px;background:#000;"></div>
<div class="a" style="left:891px;top:222px;width:1px;height:162px;background:#000;"></div>
<div class="a" style="left:948px;top:222px;width:1px;height:162px;background:#000;"></div>
<div class="a" style="left:996px;top:222px;width:1px;height:162px;background:#000;"></div>
<div class="a" style="left:1044px;top:222px;width:1px;height:162px;background:#000;"></div>
<div class="a" style="left:1097px;top:222px;width:1px;height:162px;background:#000;"></div>
<div class="a" style="left:1167px;top:222px;width:1px;height:162px;background:#000;"></div>
<div class="a" style="left:94px;top:384px;width:1px;height:295px;background:#000;"></div>
<div class="a" style="left:242px;top:384px;width:1px;height:295px;background:#000;"></div>
<div class="a" style="left:372px;top:384px;width:1px;height:295px;background:#000;"></div>
<div class="a" style="left:436px;top:384px;width:1px;height:295px;background:#000;"></div>
<div class="a" style="left:502px;top:384px;width:1px;height:295px;background:#000;"></div>
<div class="a" style="left:563px;top:384px;width:1px;height:295px;background:#000;"></div>
<div class="a" style="left:641px;top:384px;width:1px;height:295px;background:#000;"></div>
<div class="a" style="left:723px;top:384px;width:1px;height:295px;background:#000;"></div>
<div class="a" style="left:798px;top:384px;width:1px;height:295px;background:#000;"></div>
<div class="a" style="left:948px;top:384px;width:1px;height:295px;background:#000;"></div>
<div class="a" style="left:1097px;top:384px;width:1px;height:295px;background:#000;"></div>
<div class="a" style="left:1167px;top:384px;width:1px;height:295px;background:#000;"></div>
<div class="a" style="left:1309px;top:384px;width:1px;height:295px;background:#000;"></div>
<div class="a" style="left:846px;top:430px;width:1px;height:249px;background:#000;"></div>
<div class="a" style="left:891px;top:430px;width:1px;height:249px;background:#000;"></div>
<div class="a" style="left:996px;top:430px;width:1px;height:249px;background:#000;"></div>
<div class="a" style="left:1044px;top:430px;width:1px;height:249px;background:#000;"></div>
<svg class="a" style="left:26px;top:222px;" width="213" height="144" viewBox="0 0 213 144"><rect width="213" height="144" fill="#078c30"/>
<path d="M160 142 L184 87 L197 87 L173 142z" fill="#f6ea00"/>
<path d="M175 142 L199 87 L211 87 L187 142z" fill="#fff"/>
<path d="M189 142 L213 87 L213 142z" fill="#a5c52a"/>
<rect x="0" y="80" width="2" height="3" fill="#fff" opacity="0.7"/><rect x="0" y="101" width="3" height="4" fill="#fff" opacity="0.8"/><rect x="0" y="126" width="2" height="2" fill="#fff" opacity="0.6"/></svg>
<div class="a t" style="top:245px;font-size:14px;line-height:14px;color:#e8f5e9;left:26px;transform:scaleX(0.8147);transform-origin:left center;">Acuerdo Ministerial N° 1359</div>
<div class="a t" style="top:263px;font-size:14px;line-height:14px;color:#e8f5e9;left:26px;transform:scaleX(0.7541);transform-origin:left center;">RUC : 1768120600001</div>
<div class="a t" style="top:294px;font-size:13px;line-height:13px;color:#e8f5e9;left:34px;transform:scaleX(0.7028);transform-origin:left center;">(02)2773220 / 2773300</div>
<div class="a t" style="top:316px;font-size:13px;line-height:13px;color:#e8f5e9;left:34px;transform:scaleX(0.7635);transform-origin:left center;">gadprvallehermoso@hotmail.com</div>
<div class="a t" style="top:339px;font-size:13px;line-height:13px;color:#e8f5e9;left:34px;transform:scaleX(0.7777);transform-origin:left center;">www.vallehermoso.gob.ec</div>
<div class="a t" style="top:279px;font-size:12px;line-height:12px;font-weight:700;letter-spacing:0.222px;left:42.41px;width:800px;text-align:center;">REGISTRO DE FACTURAS DE COMPRA Y RETENCIONES A</div>
<div class="a t" style="top:296px;font-size:12px;line-height:12px;font-weight:700;letter-spacing:-0.071px;left:41.96px;width:800px;text-align:center;">PROVEEDORES DE SEPTIEMBRE 2023</div>
<div class="a t" style="top:279px;font-size:11px;line-height:11px;font-weight:700;letter-spacing:-0.092px;left:281.95px;width:800px;text-align:center;">Botellas</div>
<div class="a t" style="top:295px;font-size:11px;line-height:11px;font-weight:700;letter-spacing:-0.09px;left:281.95px;width:800px;text-align:center;">plásticas 1%</div>
<div class="a t" style="top:232px;font-size:11px;line-height:11px;font-weight:700;letter-spacing:-0.093px;left:360.45px;width:800px;text-align:center;">Actividades</div>
<div class="a t" style="top:248px;font-size:11px;line-height:11px;font-weight:700;letter-spacing:-0.193px;left:360.4px;width:800px;text-align:center;">de</div>
<div class="a t" style="top:264px;font-size:11px;line-height:11px;font-weight:700;letter-spacing:-0.094px;left:360.45px;width:800px;text-align:center;">construcció</div>
<div class="a t" style="top:280px;font-size:11px;line-height:11px;font-weight:700;letter-spacing:-0.093px;left:360.45px;width:800px;text-align:center;">n de obra</div>
<div class="a t" style="top:296px;font-size:11px;line-height:11px;font-weight:700;letter-spacing:-0.091px;left:360.45px;width:800px;text-align:center;">materias,</div>
<div class="a t" style="top:312px;font-size:11px;line-height:11px;font-weight:700;letter-spacing:-0.096px;left:360.45px;width:800px;text-align:center;">inmueble,</div>
<div class="a t" style="top:328px;font-size:11px;line-height:11px;font-weight:700;letter-spacing:-0.092px;left:360.45px;width:800px;text-align:center;">urbanizació</div>
<div class="a t" style="top:344px;font-size:11px;line-height:11px;font-weight:700;letter-spacing:-0.102px;left:360.45px;width:800px;text-align:center;">n 1,75%</div>
<div class="a t" style="top:255px;font-size:11px;line-height:11px;font-weight:700;letter-spacing:-0.128px;left:421.94px;width:800px;text-align:center;">Cuand</div>
<div class="a t" style="top:271px;font-size:11px;line-height:11px;font-weight:700;letter-spacing:-0.116px;left:421.94px;width:800px;text-align:center;">o no</div>
<div class="a t" style="top:287px;font-size:11px;line-height:11px;font-weight:700;letter-spacing:-0.142px;left:421.93px;width:800px;text-align:center;">hay</div>
<div class="a t" style="top:303px;font-size:11px;line-height:11px;font-weight:700;letter-spacing:-0.09px;left:421.95px;width:800px;text-align:center;">retenci</div>
<div class="a t" style="top:319px;font-size:11px;line-height:11px;font-weight:700;letter-spacing:-0.202px;left:421.9px;width:800px;text-align:center;">ón</div>
<div class="a t" style="top:239px;font-size:11px;line-height:11px;font-weight:700;letter-spacing:-0.117px;left:468.44px;width:800px;text-align:center;">100 %</div>
<div class="a t" style="top:255px;font-size:11px;line-height:11px;font-weight:700;letter-spacing:-0.095px;left:468.45px;width:800px;text-align:center;">y 1%.-</div>
<div class="a t" style="top:271px;font-size:11px;line-height:11px;font-weight:700;letter-spacing:-0.126px;left:468.44px;width:800px;text-align:center;">Regim</div>
<div class="a t" style="top:287px;font-size:11px;line-height:11px;font-weight:700;letter-spacing:-0.193px;left:468.4px;width:800px;text-align:center;">en</div>
<div class="a t" style="top:303px;font-size:11px;line-height:11px;font-weight:700;letter-spacing:-0.108px;left:468.45px;width:800px;text-align:center;">microe</div>
<div class="a t" style="top:319px;font-size:11px;line-height:11px;font-weight:700;letter-spacing:-0.124px;left:468.44px;width:800px;text-align:center;">mpres</div>
<div class="a t" style="top:335px;font-size:11px;line-height:11px;font-weight:700;letter-spacing:-0.092px;left:468.45px;width:800px;text-align:center;">a</div>
<div class="a t" style="top:266px;font-size:11px;line-height:11px;letter-spacing:-0.31px;left:519.35px;width:800px;text-align:center;">Productos</div>
<div class="a t" style="top:282px;font-size:11px;line-height:11px;letter-spacing:-0.263px;left:519.37px;width:800px;text-align:center;">agricoilaso</div>
<div class="a t" style="top:298px;font-size:11px;line-height:11px;letter-spacing:-0.306px;left:519.35px;width:800px;text-align:center;">Pecuarios</div>
<div class="a t" style="top:314px;font-size:11px;line-height:11px;letter-spacing:-0.795px;left:519.1px;width:800px;text-align:center;">1%</div>
<div class="a t" style="top:247px;font-size:11px;line-height:11px;font-weight:700;letter-spacing:-0.099px;left:571.95px;width:800px;text-align:center;">Transfe</div>
<div class="a t" style="top:263px;font-size:11px;line-height:11px;font-weight:700;letter-spacing:-0.097px;left:571.95px;width:800px;text-align:center;">rencia</div>
<div class="a t" style="top:279px;font-size:11px;line-height:11px;font-weight:700;letter-spacing:-0.193px;left:571.9px;width:800px;text-align:center;">de</div>
<div class="a t" style="top:295px;font-size:11px;line-height:11px;font-weight:700;letter-spacing:-0.105px;left:571.95px;width:800px;text-align:center;">bienes</div>
<div class="a t" style="top:311px;font-size:11px;line-height:11px;font-weight:700;letter-spacing:-0.116px;left:571.94px;width:800px;text-align:center;">mueble</div>
<div class="a t" style="top:327px;font-size:11px;line-height:11px;font-weight:700;letter-spacing:-0.101px;left:571.95px;width:800px;text-align:center;">s 1,75%</div>
<div class="a t" style="top:247px;font-size:11px;line-height:11px;font-weight:700;letter-spacing:-0.116px;left:619.94px;width:800px;text-align:center;">para</div>
<div class="a t" style="top:263px;font-size:11px;line-height:11px;font-weight:700;letter-spacing:-0.115px;left:619.94px;width:800px;text-align:center;">las</div>
<div class="a t" style="top:279px;font-size:11px;line-height:11px;font-weight:700;letter-spacing:-0.09px;left:619.96px;width:800px;text-align:center;">retenci</div>
<div class="a t" style="top:295px;font-size:11px;line-height:11px;font-weight:700;letter-spacing:-0.128px;left:619.94px;width:800px;text-align:center;">ones</div>
<div class="a t" style="top:311px;font-size:11px;line-height:11px;font-weight:700;letter-spacing:-0.119px;left:619.94px;width:800px;text-align:center;">del</div>
<div class="a t" style="top:327px;font-size:11px;line-height:11px;left:620.0px;width:800px;text-align:center;">2,75%</div>
<div class="a t" style="top:263px;font-size:11px;line-height:11px;font-weight:700;letter-spacing:-0.092px;left:670.45px;width:800px;text-align:center;">Servicio</div>
<div class="a t" style="top:279px;font-size:11px;line-height:11px;font-weight:700;letter-spacing:-0.193px;left:670.4px;width:800px;text-align:center;">de</div>
<div class="a t" style="top:295px;font-size:11px;line-height:11px;font-weight:700;letter-spacing:-0.096px;left:670.45px;width:800px;text-align:center;">transpor</div>
<div class="a t" style="top:311px;font-size:11px;line-height:11px;font-weight:700;letter-spacing:-0.108px;left:670.45px;width:800px;text-align:center;">te 1%</div>
<div class="a t" style="top:255px;font-size:11px;line-height:11px;font-weight:700;letter-spacing:-0.31px;left:731.85px;width:800px;text-align:center;">Regimen</div>
<div class="a t" style="top:271px;font-size:11px;line-height:11px;font-weight:700;letter-spacing:-0.277px;left:731.86px;width:800px;text-align:center;">Microempre</div>
<div class="a t" style="top:287px;font-size:11px;line-height:11px;font-weight:700;letter-spacing:-0.216px;left:731.89px;width:800px;text-align:center;">sarial:</div>
<div class="a t" style="top:303px;font-size:11px;line-height:11px;font-weight:700;letter-spacing:-0.247px;left:731.88px;width:800px;text-align:center;">100% y 1,75</div>
<div class="a t" style="top:319px;font-size:11px;line-height:11px;font-weight:700;letter-spacing:-0.391px;left:731.8px;width:800px;text-align:center;">%</div>
<div class="a t" style="top:369px;font-size:12px;line-height:12px;font-weight:700;letter-spacing:0.032px;left:100.02px;width:800px;text-align:center;">TOTAL 332</div>
<div class="a t" style="top:369px;font-size:12px;line-height:12px;font-weight:700;letter-spacing:-0.233px;left:202.38px;width:800px;text-align:center;">#¡REF!</div>
<div class="a t" style="top:369px;font-size:12px;line-height:12px;font-weight:700;left:282.0px;width:800px;text-align:center;">343C</div>
<div class="a t" style="top:369px;font-size:12px;line-height:12px;font-weight:700;left:360.5px;width:800px;text-align:center;">343B</div>
<div class="a t" style="top:369px;font-size:12px;line-height:12px;font-weight:700;left:422.0px;width:800px;text-align:center;">332</div>
<div class="a t" style="top:369px;font-size:12px;line-height:12px;font-weight:700;left:468.5px;width:800px;text-align:center;">343</div>
<div class="a t" style="top:369px;font-size:12px;line-height:12px;font-weight:700;left:519.5px;width:800px;text-align:center;">312A</div>
<div class="a t" style="top:369px;font-size:12px;line-height:12px;left:572.0px;width:800px;text-align:center;">312</div>
<div class="a t" style="top:369px;font-size:12px;line-height:12px;font-weight:700;left:620.0px;width:800px;text-align:center;">3440</div>
<div class="a t" style="top:369px;font-size:12px;line-height:12px;font-weight:700;left:670.5px;width:800px;text-align:center;">310</div>
<div class="a t" style="top:369px;font-size:12px;line-height:12px;font-weight:700;left:732.0px;width:800px;text-align:center;">351</div>
<div class="a t" style="top:404px;font-size:10px;line-height:10px;font-weight:700;letter-spacing:0.555px;left:-338.72px;width:800px;text-align:center;">TIPO</div>
<div class="a t" style="top:419px;font-size:10px;line-height:10px;font-weight:700;letter-spacing:0.9px;left:32px;">COMPRO</div>
<div class="a t" style="top:412px;font-size:10px;line-height:10px;font-weight:700;letter-spacing:0.158px;left:-231.72px;width:800px;text-align:center;">AUTORIZACIÓN</div>
<div class="a t" style="top:412px;font-size:10px;line-height:10px;font-weight:700;letter-spacing:-0.113px;left:-93.06px;width:800px;text-align:center;">PROVEEDOR</div>
<div class="a t" style="top:412px;font-size:10px;line-height:10px;font-weight:700;letter-spacing:0.6px;left:378.5px;">BASE 12%</div>
<div class="a t" style="top:412px;font-size:10px;line-height:10px;font-weight:700;letter-spacing:0.6px;left:447.7px;">BASE 0%</div>
<div class="a t" style="top:412px;font-size:10px;line-height:10px;font-weight:700;letter-spacing:0.565px;left:133.38px;width:800px;text-align:center;">IVA</div>
<div class="a t" style="top:402px;font-size:10px;line-height:10px;font-weight:700;letter-spacing:-0.121px;left:201.74px;width:800px;text-align:center;">SUBTO-TAL</div>
<div class="a t" style="top:435px;font-size:10px;line-height:10px;font-weight:700;letter-spacing:0.158px;left:202.68px;width:800px;text-align:center;">332</div>
<div class="a t" style="top:411px;font-size:10px;line-height:10px;font-weight:700;letter-spacing:-0.531px;left:281.83px;width:800px;text-align:center;">TOTAL</div>
<div class="a t" style="top:403px;font-size:10px;line-height:10px;font-weight:700;left:361.8px;width:800px;text-align:center;">N°</div>
<div class="a t" style="top:419px;font-size:10px;line-height:10px;font-weight:700;letter-spacing:0.55px;left:731.3px;">RETENCION</div>
<div class="a t" style="top:402px;font-size:10px;line-height:10px;font-weight:700;letter-spacing:0.205px;left:473.7px;width:800px;text-align:center;">RETENCION IVA</div>
<div class="a t" style="top:435px;font-size:10px;line-height:10px;font-weight:700;letter-spacing:0.3px;left:42.8px;width:800px;text-align:right;">30%</div>
<div class="a t" style="top:435px;font-size:10px;line-height:10px;font-weight:700;letter-spacing:0.3px;left:87.8px;width:800px;text-align:right;">70%</div>
<div class="a t" style="top:435px;font-size:10px;line-height:10px;font-weight:700;letter-spacing:0.3px;left:145.5px;width:800px;text-align:right;">100%</div>
<div class="a t" style="top:435px;font-size:10px;line-height:10px;font-weight:700;letter-spacing:0.3px;left:193.7px;width:800px;text-align:right;">COD</div>
<div class="a t" style="top:435px;font-size:10px;line-height:10px;font-weight:700;letter-spacing:0.3px;left:294.1px;width:800px;text-align:right;">VAL</div>
<div class="a t" style="top:435px;font-size:10px;line-height:10px;font-weight:700;left:619.4px;width:800px;text-align:center;">%</div>
<div class="a t" style="top:402px;font-size:10px;line-height:10px;font-weight:700;letter-spacing:-0.012px;left:622.99px;width:800px;text-align:center;">RETENCIÓN A LA RENTA</div>
<div class="a t" style="top:404px;font-size:10px;line-height:10px;font-weight:700;letter-spacing:-0.375px;left:732.41px;width:800px;text-align:center;">VALOR</div>
<div class="a t" style="top:419px;font-size:10px;line-height:10px;font-weight:700;letter-spacing:0.184px;left:733.09px;width:800px;text-align:center;">PAGO</div>
<div class="a t" style="top:396px;font-size:10px;line-height:10px;font-weight:700;letter-spacing:-0.111px;left:838.94px;width:800px;text-align:center;">RETENCION</div>
<div class="a t" style="top:411px;font-size:10px;line-height:10px;font-weight:700;letter-spacing:0.122px;left:839.06px;width:800px;text-align:center;">AUTORIZACION</div>
<div class="a t" style="top:426px;font-size:10px;line-height:10px;font-weight:700;letter-spacing:0.156px;left:839.08px;width:800px;text-align:center;">COMPROBANTE</div>
<div class="a" style="left:77px;top:411px;width:17px;height:17px;background:linear-gradient(#f7f7f7,#e9e9e9);box-sizing:border-box;border:1px solid #b4b4b4;"></div>
<svg class="a" style="left:82px;top:417px;" width="8" height="5" viewBox="0 0 8 5"><path d="M0 0h7l-3.5 4z" fill="#666"/></svg>
<div class="a" style="left:225px;top:411px;width:17px;height:17px;background:linear-gradient(#f7f7f7,#e9e9e9);box-sizing:border-box;border:1px solid #b4b4b4;"></div>
<svg class="a" style="left:230px;top:417px;" width="8" height="5" viewBox="0 0 8 5"><path d="M0 0h7l-3.5 4z" fill="#666"/></svg>
<div class="a" style="left:355px;top:411px;width:17px;height:17px;background:linear-gradient(#f7f7f7,#e9e9e9);box-sizing:border-box;border:1px solid #b4b4b4;"></div>
<svg class="a" style="left:360px;top:417px;" width="8" height="5" viewBox="0 0 8 5"><path d="M0 0h7l-3.5 4z" fill="#666"/></svg>
<div class="a" style="left:419px;top:411px;width:17px;height:17px;background:linear-gradient(#f7f7f7,#e9e9e9);box-sizing:border-box;border:1px solid #b4b4b4;"></div>
<svg class="a" style="left:424px;top:417px;" width="8" height="5" viewBox="0 0 8 5"><path d="M0 0h7l-3.5 4z" fill="#666"/></svg>
<div class="a" style="left:485px;top:411px;width:17px;height:17px;background:linear-gradient(#f7f7f7,#e9e9e9);box-sizing:border-box;border:1px solid #b4b4b4;"></div>
<svg class="a" style="left:490px;top:417px;" width="8" height="5" viewBox="0 0 8 5"><path d="M0 0h7l-3.5 4z" fill="#666"/></svg>
<div class="a" style="left:546px;top:411px;width:17px;height:17px;background:linear-gradient(#f7f7f7,#e9e9e9);box-sizing:border-box;border:1px solid #b4b4b4;"></div>
<svg class="a" style="left:551px;top:417px;" width="8" height="5" viewBox="0 0 8 5"><path d="M0 0h7l-3.5 4z" fill="#666"/></svg>
<div class="a" style="left:624px;top:411px;width:17px;height:17px;background:linear-gradient(#f7f7f7,#e9e9e9);box-sizing:border-box;border:1px solid #b4b4b4;"></div>
<svg class="a" style="left:629px;top:417px;" width="8" height="5" viewBox="0 0 8 5"><path d="M0 0h7l-3.5 4z" fill="#666"/></svg>
<div class="a" style="left:706px;top:411px;width:17px;height:17px;background:linear-gradient(#f7f7f7,#e9e9e9);box-sizing:border-box;border:1px solid #b4b4b4;"></div>
<svg class="a" style="left:711px;top:417px;" width="8" height="5" viewBox="0 0 8 5"><path d="M0 0h7l-3.5 4z" fill="#666"/></svg>
<div class="a" style="left:781px;top:411px;width:17px;height:17px;background:linear-gradient(#f7f7f7,#e9e9e9);box-sizing:border-box;border:1px solid #b4b4b4;"></div>
<svg class="a" style="left:786px;top:417px;" width="8" height="5" viewBox="0 0 8 5"><path d="M0 0h7l-3.5 4z" fill="#666"/></svg>
<div class="a" style="left:931px;top:411px;width:17px;height:17px;background:linear-gradient(#f7f7f7,#e9e9e9);box-sizing:border-box;border:1px solid #b4b4b4;"></div>
<svg class="a" style="left:936px;top:417px;" width="8" height="5" viewBox="0 0 8 5"><path d="M0 0h7l-3.5 4z" fill="#666"/></svg>
<div class="a" style="left:1080px;top:411px;width:17px;height:17px;background:linear-gradient(#f7f7f7,#e9e9e9);box-sizing:border-box;border:1px solid #b4b4b4;"></div>
<svg class="a" style="left:1085px;top:417px;" width="8" height="5" viewBox="0 0 8 5"><path d="M0 0h7l-3.5 4z" fill="#666"/></svg>
<div class="a" style="left:1150px;top:411px;width:17px;height:17px;background:linear-gradient(#f7f7f7,#e9e9e9);box-sizing:border-box;border:1px solid #b4b4b4;"></div>
<svg class="a" style="left:1155px;top:417px;" width="8" height="5" viewBox="0 0 8 5"><path d="M0 0h7l-3.5 4z" fill="#666"/></svg>
<div class="a" style="left:1292px;top:411px;width:17px;height:17px;background:linear-gradient(#f7f7f7,#e9e9e9);box-sizing:border-box;border:1px solid #b4b4b4;"></div>
<svg class="a" style="left:1297px;top:417px;" width="8" height="5" viewBox="0 0 8 5"><path d="M0 0h7l-3.5 4z" fill="#666"/></svg>
<div class="a t" style="top:468px;font-size:11px;line-height:11px;letter-spacing:-0.7px;left:28.6px;">FACT. ELEC.</div>
<div class="a t" style="top:452px;font-size:11px;line-height:11px;letter-spacing:0.93px;left:97.6px;">31020230117681525600</div>
<div class="a t" style="top:468px;font-size:11px;line-height:11px;letter-spacing:0.93px;left:97.6px;">01200177721709225903</div>
<div class="a t" style="top:484px;font-size:11px;line-height:11px;letter-spacing:0.93px;left:97.6px;">10202313</div>
<div class="a t" style="top:452px;font-size:11px;line-height:11px;letter-spacing:-0.35px;left:245px;">CORPORACION</div>
<div class="a t" style="top:468px;font-size:11px;line-height:11px;letter-spacing:-0.35px;left:245px;">NACIONAL DE</div>
<div class="a t" style="top:484px;font-size:11px;line-height:11px;letter-spacing:-0.35px;left:245px;">TELECOMUNICACIONES</div>
<div class="a t" style="top:468px;font-size:11px;line-height:11px;letter-spacing:1.1px;left:5.05px;width:800px;text-align:center;">6.20</div>
<div class="a t" style="top:468px;font-size:11px;line-height:11px;letter-spacing:1.1px;left:70.55px;width:800px;text-align:center;">0.00</div>
<div class="a t" style="top:468px;font-size:11px;line-height:11px;letter-spacing:1.1px;left:133.05px;width:800px;text-align:center;">0.74</div>
<div class="a t" style="top:468px;font-size:11px;line-height:11px;letter-spacing:1.1px;left:203.05px;width:800px;text-align:center;">6.20</div>
<div class="a t" style="top:468px;font-size:11px;line-height:11px;letter-spacing:1.1px;left:283.55px;width:800px;text-align:center;">6.94</div>
<div class="a t" style="top:468px;font-size:11px;line-height:11px;letter-spacing:1.1px;left:361.55px;width:800px;text-align:center;">000001315</div>
<div class="a t" style="top:468px;font-size:11px;line-height:11px;letter-spacing:1.1px;left:520.55px;width:800px;text-align:center;">0.74</div>
<div class="a t" style="top:468px;font-size:11px;line-height:11px;letter-spacing:1.1px;left:572.75px;width:800px;text-align:center;">332</div>
<div class="a t" style="top:468px;font-size:11px;line-height:11px;letter-spacing:0.403px;left:620.8px;width:800px;text-align:center;">0.00%</div>
<div class="a t" style="top:468px;font-size:11px;line-height:11px;letter-spacing:1.1px;left:671.15px;width:800px;text-align:center;">0.00</div>
<div class="a t" style="top:468px;font-size:11px;line-height:11px;letter-spacing:1.1px;left:732.55px;width:800px;text-align:center;">6.20</div>
<div class="a t" style="top:452px;font-size:11px;line-height:11px;letter-spacing:0.93px;left:1170.8px;">0310202307176812060</div>
<div class="a t" style="top:468px;font-size:11px;line-height:11px;letter-spacing:0.93px;left:1170.8px;">0001200100100000131</div>
<div class="a t" style="top:484px;font-size:11px;line-height:11px;letter-spacing:0.93px;left:1170.8px;">51234567814</div>
<div class="a t" style="top:468px;font-size:11px;line-height:11px;letter-spacing:0.1px;left:1312px;">TELEF</div>
<div class="a t" style="top:516px;font-size:11px;line-height:11px;letter-spacing:-0.7px;left:28.6px;">FACT. ELEC.</div>
<div class="a t" style="top:500px;font-size:11px;line-height:11px;letter-spacing:0.93px;left:97.6px;">03102023011768152560</div>
<div class="a t" style="top:516px;font-size:11px;line-height:11px;letter-spacing:0.93px;left:97.6px;">00120017772170922580</div>
<div class="a t" style="top:532px;font-size:11px;line-height:11px;letter-spacing:0.93px;left:97.6px;">310202318</div>
<div class="a t" style="top:500px;font-size:11px;line-height:11px;letter-spacing:-0.35px;left:245px;">CORPORACION</div>
<div class="a t" style="top:516px;font-size:11px;line-height:11px;letter-spacing:-0.35px;left:245px;">NACIONAL DE</div>
<div class="a t" style="top:532px;font-size:11px;line-height:11px;letter-spacing:-0.35px;left:245px;">TELECOMUNICACIONES</div>
<div class="a t" style="top:516px;font-size:11px;line-height:11px;letter-spacing:1.1px;left:5.05px;width:800px;text-align:center;">6.20</div>
<div class="a t" style="top:516px;font-size:11px;line-height:11px;letter-spacing:1.1px;left:70.55px;width:800px;text-align:center;">0.00</div>
<div class="a t" style="top:516px;font-size:11px;line-height:11px;letter-spacing:1.1px;left:133.05px;width:800px;text-align:center;">0.74</div>
<div class="a t" style="top:516px;font-size:11px;line-height:11px;letter-spacing:1.1px;left:203.05px;width:800px;text-align:center;">6.20</div>
<div class="a t" style="top:516px;font-size:11px;line-height:11px;letter-spacing:1.1px;left:283.55px;width:800px;text-align:center;">6.94</div>
<div class="a t" style="top:516px;font-size:11px;line-height:11px;letter-spacing:1.1px;left:361.55px;width:800px;text-align:center;">000001314</div>
<div class="a t" style="top:516px;font-size:11px;line-height:11px;letter-spacing:1.1px;left:520.55px;width:800px;text-align:center;">0.74</div>
<div class="a t" style="top:516px;font-size:11px;line-height:11px;letter-spacing:1.1px;left:572.75px;width:800px;text-align:center;">332</div>
<div class="a t" style="top:516px;font-size:11px;line-height:11px;letter-spacing:0.403px;left:620.8px;width:800px;text-align:center;">0.00%</div>
<div class="a t" style="top:516px;font-size:11px;line-height:11px;letter-spacing:1.1px;left:671.15px;width:800px;text-align:center;">0.00</div>
<div class="a t" style="top:516px;font-size:11px;line-height:11px;letter-spacing:1.1px;left:732.55px;width:800px;text-align:center;">6.20</div>
<div class="a t" style="top:500px;font-size:11px;line-height:11px;letter-spacing:0.93px;left:1170.8px;">0310202307176812060</div>
<div class="a t" style="top:516px;font-size:11px;line-height:11px;letter-spacing:0.93px;left:1170.8px;">0001200100100000131</div>
<div class="a t" style="top:532px;font-size:11px;line-height:11px;letter-spacing:0.93px;left:1170.8px;">41234567819</div>
<div class="a t" style="top:516px;font-size:11px;line-height:11px;letter-spacing:0.1px;left:1312px;">TELEF</div>
<div class="a t" style="top:564px;font-size:11px;line-height:11px;letter-spacing:-0.7px;left:28.6px;">FACT. ELEC.</div>
<div class="a t" style="top:548px;font-size:11px;line-height:11px;letter-spacing:0.93px;left:97.6px;">06102023011760002600</div>
<div class="a t" style="top:564px;font-size:11px;line-height:11px;letter-spacing:0.93px;left:97.6px;">00120170320000473941</div>
<div class="a t" style="top:580px;font-size:11px;line-height:11px;letter-spacing:0.93px;left:97.6px;">234567816</div>
<div class="a t" style="top:548px;font-size:11px;line-height:11px;letter-spacing:-0.35px;left:245px;">BANCO CENTRAL DEL</div>
<div class="a t" style="top:564px;font-size:11px;line-height:11px;letter-spacing:-0.35px;left:245px;">ECUADOR</div>
<div class="a t" style="top:564px;font-size:11px;line-height:11px;letter-spacing:1.1px;left:5.05px;width:800px;text-align:center;">0.00</div>
<div class="a t" style="top:564px;font-size:11px;line-height:11px;letter-spacing:1.1px;left:70.55px;width:800px;text-align:center;">0.20</div>
<div class="a t" style="top:564px;font-size:11px;line-height:11px;letter-spacing:1.1px;left:133.05px;width:800px;text-align:center;">0.00</div>
<div class="a t" style="top:564px;font-size:11px;line-height:11px;letter-spacing:1.1px;left:203.05px;width:800px;text-align:center;">0.20</div>
<div class="a t" style="top:564px;font-size:11px;line-height:11px;letter-spacing:1.1px;left:283.55px;width:800px;text-align:center;">0.20</div>
<div class="a t" style="top:564px;font-size:11px;line-height:11px;letter-spacing:-0.578px;left:360.71px;width:800px;text-align:center;">SIN. RET</div>
<div class="a t" style="top:564px;font-size:11px;line-height:11px;letter-spacing:1.1px;left:520.55px;width:800px;text-align:center;">0.00</div>
<div class="a t" style="top:564px;font-size:11px;line-height:11px;letter-spacing:1.1px;left:572.75px;width:800px;text-align:center;">332</div>
<div class="a t" style="top:564px;font-size:11px;line-height:11px;letter-spacing:0.403px;left:620.8px;width:800px;text-align:center;">0.00%</div>
<div class="a t" style="top:564px;font-size:11px;line-height:11px;letter-spacing:1.1px;left:671.15px;width:800px;text-align:center;">0.00</div>
<div class="a t" style="top:564px;font-size:11px;line-height:11px;letter-spacing:1.1px;left:732.55px;width:800px;text-align:center;">0.20</div>
<div class="a t" style="top:564px;font-size:11px;line-height:11px;letter-spacing:0.1px;left:1312px;">COM</div>
<div class="a t" style="top:612px;font-size:11px;line-height:11px;letter-spacing:-0.7px;left:28.6px;">NOTA VEN.</div>
<div class="a t" style="top:596px;font-size:11px;line-height:11px;letter-spacing:0.93px;left:97.6px;">1130924528</div>
<div class="a t" style="top:596px;font-size:11px;line-height:11px;letter-spacing:-0.35px;left:245px;">AMAGUAÑA OLAYA</div>
<div class="a t" style="top:612px;font-size:11px;line-height:11px;letter-spacing:-0.35px;left:245px;">EVELYN VERONICA</div>
<div class="a t" style="top:612px;font-size:11px;line-height:11px;letter-spacing:1.1px;left:5.05px;width:800px;text-align:center;">0.00</div>
<div class="a t" style="top:612px;font-size:11px;line-height:11px;letter-spacing:1.1px;left:70.55px;width:800px;text-align:center;">89.60</div>
<div class="a t" style="top:612px;font-size:11px;line-height:11px;letter-spacing:1.1px;left:133.05px;width:800px;text-align:center;">0.00</div>
<div class="a t" style="top:612px;font-size:11px;line-height:11px;letter-spacing:1.1px;left:203.05px;width:800px;text-align:center;">89.60</div>
<div class="a t" style="top:612px;font-size:11px;line-height:11px;letter-spacing:1.1px;left:283.55px;width:800px;text-align:center;">89.60</div>
<div class="a t" style="top:612px;font-size:11px;line-height:11px;letter-spacing:-0.578px;left:360.71px;width:800px;text-align:center;">SIN. RET</div>
<div class="a t" style="top:612px;font-size:11px;line-height:11px;letter-spacing:1.1px;left:520.55px;width:800px;text-align:center;">0.00</div>
<div class="a t" style="top:612px;font-size:11px;line-height:11px;letter-spacing:1.1px;left:572.75px;width:800px;text-align:center;">332</div>
<div class="a t" style="top:612px;font-size:11px;line-height:11px;letter-spacing:0.403px;left:620.8px;width:800px;text-align:center;">0.00%</div>
<div class="a t" style="top:612px;font-size:11px;line-height:11px;letter-spacing:1.1px;left:671.15px;width:800px;text-align:center;">0.00</div>
<div class="a t" style="top:612px;font-size:11px;line-height:11px;letter-spacing:1.1px;left:732.55px;width:800px;text-align:center;">89.60</div>
<div class="a t" style="top:596px;font-size:11px;line-height:11px;letter-spacing:0.1px;left:1312px;">LOGI</div>
<div class="a t" style="top:612px;font-size:11px;line-height:11px;letter-spacing:0.1px;left:1312px;">TEAT</div>
<div class="a t" style="top:628px;font-size:11px;line-height:11px;letter-spacing:0.1px;left:1312px;">PCD"</div>
<div class="a t" style="top:660px;font-size:11px;line-height:11px;letter-spacing:-0.7px;left:28.6px;">FACT. ELEC.</div>
<div class="a t" style="top:644px;font-size:11px;line-height:11px;letter-spacing:0.93px;left:97.6px;">18102023011760002600</div>
<div class="a t" style="top:660px;font-size:11px;line-height:11px;letter-spacing:0.93px;left:97.6px;">00120010510001513901</div>
<div class="a t" style="top:676px;font-size:11px;line-height:11px;letter-spacing:0.93px;left:97.6px;">004763816</div>
<div class="a t" style="top:644px;font-size:11px;line-height:11px;letter-spacing:-0.35px;left:245px;">BANCO CENTRAL DEL</div>
<div class="a t" style="top:660px;font-size:11px;line-height:11px;letter-spacing:-0.35px;left:245px;">ECUADOR</div>
<div class="a t" style="top:660px;font-size:11px;line-height:11px;letter-spacing:1.1px;left:5.05px;width:800px;text-align:center;">0.00</div>
<div class="a t" style="top:660px;font-size:11px;line-height:11px;letter-spacing:1.1px;left:70.55px;width:800px;text-align:center;">0.10</div>
<div class="a t" style="top:660px;font-size:11px;line-height:11px;letter-spacing:1.1px;left:133.05px;width:800px;text-align:center;">0.00</div>
<div class="a t" style="top:660px;font-size:11px;line-height:11px;letter-spacing:1.1px;left:203.05px;width:800px;text-align:center;">0.10</div>
<div class="a t" style="top:660px;font-size:11px;line-height:11px;letter-spacing:1.1px;left:283.55px;width:800px;text-align:center;">0.10</div>
<div class="a t" style="top:660px;font-size:11px;line-height:11px;letter-spacing:-0.578px;left:360.71px;width:800px;text-align:center;">SIN. RET</div>
<div class="a t" style="top:660px;font-size:11px;line-height:11px;letter-spacing:1.1px;left:520.55px;width:800px;text-align:center;">0.00</div>
<div class="a t" style="top:660px;font-size:11px;line-height:11px;letter-spacing:1.1px;left:572.75px;width:800px;text-align:center;">332</div>
<div class="a t" style="top:660px;font-size:11px;line-height:11px;letter-spacing:0.403px;left:620.8px;width:800px;text-align:center;">0.00%</div>
<div class="a t" style="top:660px;font-size:11px;line-height:11px;letter-spacing:1.1px;left:671.15px;width:800px;text-align:center;">0.00</div>
<div class="a t" style="top:660px;font-size:11px;line-height:11px;letter-spacing:1.1px;left:732.55px;width:800px;text-align:center;">0.10</div>
<div class="a t" style="top:660px;font-size:11px;line-height:11px;letter-spacing:0.1px;left:1312px;">COM</div>
<svg class="a" style="left:95px;top:449px;" width="7" height="7" viewBox="0 0 7 7"><path d="M0 0h6.5L0 6.5z" fill="#1e7b30"/></svg>
<svg class="a" style="left:95px;top:497px;" width="7" height="7" viewBox="0 0 7 7"><path d="M0 0h6.5L0 6.5z" fill="#1e7b30"/></svg>
<svg class="a" style="left:95px;top:545px;" width="7" height="7" viewBox="0 0 7 7"><path d="M0 0h6.5L0 6.5z" fill="#1e7b30"/></svg>
<svg class="a" style="left:95px;top:593px;" width="7" height="7" viewBox="0 0 7 7"><path d="M0 0h6.5L0 6.5z" fill="#1e7b30"/></svg>
<svg class="a" style="left:95px;top:641px;" width="7" height="7" viewBox="0 0 7 7"><path d="M0 0h6.5L0 6.5z" fill="#1e7b30"/></svg>
<svg class="a" style="left:724px;top:449px;" width="7" height="7" viewBox="0 0 7 7"><path d="M0 0h6.5L0 6.5z" fill="#1e7b30"/></svg>
<svg class="a" style="left:1168px;top:449px;" width="7" height="7" viewBox="0 0 7 7"><path d="M0 0h6.5L0 6.5z" fill="#1e7b30"/></svg>
<svg class="a" style="left:724px;top:497px;" width="7" height="7" viewBox="0 0 7 7"><path d="M0 0h6.5L0 6.5z" fill="#1e7b30"/></svg>
<svg class="a" style="left:1168px;top:497px;" width="7" height="7" viewBox="0 0 7 7"><path d="M0 0h6.5L0 6.5z" fill="#1e7b30"/></svg>
<svg class="a" style="left:564px;top:365px;" width="7" height="7" viewBox="0 0 7 7"><path d="M0 0h6.5L0 6.5z" fill="#1e7b30"/></svg>
<div class="a" style="left:1339px;top:203px;width:21px;height:476px;background:#e6e6e6;"></div>
<div class="a" style="left:1341px;top:222px;width:17px;height:440px;background:#f0f0f0;"></div>
<div class="a" style="left:1342px;top:205px;width:15px;height:15px;background:#fff;box-sizing:border-box;border:1px solid #ababab;"></div>
<svg class="a" style="left:1345px;top:210px;" width="9" height="5" viewBox="0 0 9 5"><path d="M0 4.5h9L4.5 0z" fill="#222"/></svg>
<div class="a" style="left:1342px;top:331px;width:15px;height:86px;background:#fff;box-sizing:border-box;border:1px solid #ababab;"></div>
<div class="a" style="left:1342px;top:663px;width:15px;height:15px;background:#fff;box-sizing:border-box;border:1px solid #ababab;"></div>
<svg class="a" style="left:1345px;top:668px;" width="9" height="5" viewBox="0 0 9 5"><path d="M0 0h9L4.5 4.5z" fill="#222"/></svg>
<div class="a" style="left:0px;top:679px;width:1360px;height:27px;background:#e6e6e6;"></div>
<div class="a" style="left:0px;top:679px;width:1360px;height:1px;background:#d0d0d0;"></div>
<svg class="a" style="left:25px;top:687px;" width="6" height="9" viewBox="0 0 6 9"><path d="M5.5 0 V9 L0 4.5z" fill="#217346"/></svg>
<svg class="a" style="left:55px;top:687px;" width="6" height="9" viewBox="0 0 6 9"><path d="M0.5 0 V9 L6 4.5z" fill="#b8b8b8"/></svg>
<div class="a" style="left:81px;top:695px;width:2px;height:2px;background:#217346;"></div>
<div class="a" style="left:85px;top:695px;width:2px;height:2px;background:#217346;"></div>
<div class="a" style="left:89px;top:695px;width:2px;height:2px;background:#217346;"></div>
<div class="a" style="left:100px;top:683px;width:1px;height:19px;background:#b0b0b0;"></div>
<div class="a" style="left:192px;top:683px;width:1px;height:19px;background:#b0b0b0;"></div>
<div class="a" style="left:301px;top:683px;width:1px;height:19px;background:#b0b0b0;"></div>
<div class="a t" style="top:686px;font-size:12px;line-height:12px;color:#333;letter-spacing:-0.004px;left:-254.4px;width:800px;text-align:center;">JULIO 2023</div>
<div class="a t" style="top:686px;font-size:12px;line-height:12px;color:#333;letter-spacing:0.113px;left:-153.74px;width:800px;text-align:center;">AGOSTO 2023</div>
<div class="a t" style="top:686px;font-size:12px;line-height:12px;color:#333;letter-spacing:-0.313px;left:-33.16px;width:800px;text-align:center;">SEPTIEMBRE 2023</div>
<div class="a" style="left:437px;top:678px;width:115px;height:25px;background:#fff;"></div>
<div class="a" style="left:437px;top:701px;width:115px;height:2px;background:#217346;"></div>
<div class="a t" style="top:686px;font-size:12px;line-height:12px;font-weight:700;color:#217346;letter-spacing:-0.033px;left:93.48px;width:800px;text-align:center;">OCTUBRE 2023</div>
<svg class="a" style="left:584px;top:684px;" width="17" height="17" viewBox="0 0 17 17"><circle cx="8.5" cy="8.5" r="7.5" fill="none" stroke="#777" stroke-width="1.2"/><path d="M8.5 4.5v8M4.5 8.5h8" stroke="#777" stroke-width="1.4"/></svg>
<div class="a" style="left:729px;top:686px;width:2px;height:2px;background:#b0b0b0;"></div>
<div class="a" style="left:729px;top:690px;width:2px;height:2px;background:#b0b0b0;"></div>
<div class="a" style="left:729px;top:694px;width:2px;height:2px;background:#b0b0b0;"></div>
<div class="a" style="left:746px;top:685px;width:590px;height:15px;background:#f0f0f0;"></div>
<div class="a" style="left:746px;top:685px;width:15px;height:15px;background:#fff;box-sizing:border-box;border:1px solid #ababab;"></div>
<svg class="a" style="left:750px;top:688px;" width="5" height="9" viewBox="0 0 5 9"><path d="M5 0 V9 L0 4.5z" fill="#222"/></svg>
<div class="a" style="left:891px;top:685px;width:387px;height:15px;background:#fff;box-sizing:border-box;border:1px solid #ababab;"></div>
<div class="a" style="left:1321px;top:685px;width:15px;height:15px;background:#fff;box-sizing:border-box;border:1px solid #ababab;"></div>
<svg class="a" style="left:1326px;top:688px;" width="5" height="9" viewBox="0 0 5 9"><path d="M0 0 V9 L5 4.5z" fill="#222"/></svg>
<div class="a" style="left:0px;top:706px;width:1360px;height:22px;background:#f3f3f3;"></div>
<div class="a" style="left:0px;top:706px;width:1360px;height:1px;background:#dadada;"></div>
<div class="a t" style="top:712px;font-size:12px;line-height:12px;color:#333;letter-spacing:-0.762px;left:8px;">Listo</div>
<svg class="a" style="left:49px;top:709px;" width="18" height="17" viewBox="0 0 18 17"><path d="M8 2 A6 6 0 1 0 13 12" fill="none" stroke="#555" stroke-width="1.4" stroke-dasharray="2 1.5"/><path d="M6 1 V7 H10" fill="none" stroke="#555" stroke-width="1.3"/><path d="M10 10 L16 16 M16 10 L10 16" stroke="#333" stroke-width="1.6"/></svg>
<div class="a t" style="top:712px;font-size:12px;line-height:12px;color:#333;letter-spacing:-0.285px;left:69px;">Accesibilidad: es necesario investigar</div>
<div class="a" style="left:1066px;top:706px;width:40px;height:22px;background:#c8c8c8;"></div>
<svg class="a" style="left:1078px;top:710px;" width="15" height="14" viewBox="0 0 15 14"><rect x="0.5" y="0.5" width="14" height="13" fill="none" stroke="#666"/><path d="M0.5 4.8h14 M0.5 9.2h14 M5.2 0.5v13 M9.8 0.5v13" stroke="#666"/></svg>
<svg class="a" style="left:1119px;top:710px;" width="15" height="14" viewBox="0 0 15 14"><rect x="0.5" y="0.5" width="14" height="13" fill="none" stroke="#666"/><rect x="3.5" y="3" width="8" height="8" fill="none" stroke="#666"/><path d="M5 5.5h5M5 7.5h5M5 9.2h5" stroke="#666" stroke-width="0.8"/></svg>
<svg class="a" style="left:1159px;top:710px;" width="15" height="14" viewBox="0 0 15 14"><rect x="0.5" y="0.5" width="14" height="13" fill="none" stroke="#666"/><path d="M5 0.5v7h5v-7" fill="none" stroke="#666"/></svg>
<div class="a" style="left:1191px;top:717px;width:9px;height:1px;background:#444;"></div>
<div class="a" style="left:1205px;top:717px;width:101px;height:1px;background:#555;"></div>
<div class="a" style="left:1251px;top:711px;width:5px;height:12px;background:#444;"></div>
<div class="a" style="left:1309px;top:717px;width:9px;height:1px;background:#444;"></div>
<div class="a" style="left:1313px;top:713px;width:1px;height:9px;background:#444;"></div>
<div class="a t" style="top:713px;font-size:11px;line-height:11px;color:#333;left:942.0px;width:800px;text-align:center;transform:scaleX(0.9084);transform-origin:center center;">95%</div>
<div class="a" style="left:0px;top:728px;width:1360px;height:40px;background:#101010;"></div>
<svg class="a" style="left:16px;top:740px;" width="17" height="17" viewBox="0 0 17 17"><path d="M0 2.3 L7 1.3 V8 H0z M8 1.1 L17 0 V8 H8z M0 9 H7 V15.7 L0 14.7z M8 9 H17 V17 L8 15.9z" fill="#fff"/></svg>
<div class="a" style="left:48px;top:728px;width:343px;height:40px;background:#f2f2f2;box-sizing:border-box;border:1px solid #d0d0d0;"></div>
<svg class="a" style="left:60px;top:737px;" width="18" height="20" viewBox="0 0 18 20"><circle cx="11" cy="7" r="5.5" fill="none" stroke="#222" stroke-width="1.5"/><path d="M7 11 L1 18" stroke="#222" stroke-width="1.6"/></svg>
<div class="a t" style="top:741px;font-size:15px;line-height:15px;color:#222;letter-spacing:-0.272px;left:88px;">Escribe aquí para buscar</div>
<svg class="a" style="left:312px;top:738px;" width="79" height="30" viewBox="0 0 79 30"><path d="M22 23 L44 1.5 L48 2.5 L62 9 L72 13 L79 17 V26 H22z" fill="#bba58f"/><path d="M48 2.5 L62 9 L72 13 L79 17 V25 L60 24z" fill="#9aa872"/><path d="M0 30 C6 24 14 21 26 21 C40 21 55 19 79 22 V30z" fill="#a3bb74"/><path d="M14 5 L22 6 L23 23 L14 24z" fill="#c48c62"/><ellipse cx="70" cy="21" rx="6" ry="4" fill="#d9a373"/></svg>
<svg class="a" style="left:407px;top:736px;" width="24" height="24" viewBox="0 0 24 24"><circle cx="12" cy="12" r="11.5" fill="#1ed760"/><path d="M6 8.5 C10 7 15 7.5 18.5 9.5 M6.5 12 C10 11 14 11.2 17.5 13 M7 15.3 C10 14.5 13 14.7 16 16" fill="none" stroke="#101010" stroke-width="1.8" stroke-linecap="round"/></svg>
<svg class="a" style="left:456px;top:736px;" width="24" height="24" viewBox="0 0 24 24"><defs><linearGradient id="eg" x1="0" y1="1" x2="1" y2="0"><stop offset="0" stop-color="#0f6cc4"/><stop offset="0.55" stop-color="#2aa0e0"/><stop offset="1" stop-color="#5fd67a"/></linearGradient></defs><circle cx="12" cy="12" r="11.5" fill="url(#eg)"/><path d="M3 17 C1 11 5 6 10 6.5 C6 8 5 13 8 17 C10 20 15 21 19 19 C16 23 7 23 3 17z" fill="#0b4f9c"/><path d="M10 13 C10 10 13 8.5 16.5 9 C20 9.5 22 11.5 22 13.5 C22 15 20.5 15.8 18.5 15.8 H13 C11 15.8 10 14.5 10 13z" fill="#101010"/></svg>
<svg class="a" style="left:505px;top:736px;" width="24" height="24" viewBox="0 0 24 24"><circle cx="12" cy="12" r="11.5" fill="#e34133"/><path d="M12 12 L1.8 6.1 A11.5 11.5 0 0 0 9 23.1z" fill="#34a853"/><path d="M12 12 L9 23.1 A11.5 11.5 0 0 0 22.8 8z" fill="#fbbc05"/><circle cx="12" cy="12" r="5.2" fill="#fff"/><circle cx="12" cy="12" r="4.1" fill="#4285f4"/></svg>
<svg class="a" style="left:554px;top:736px;" width="24" height="24" viewBox="0 0 24 24"><circle cx="12" cy="13" r="10.5" fill="#ff6a2b"/><path d="M17 2 C21 5 23 10 22 15 C21 10 18 7 14 7 C10 7 7 10 7 13 C5 10 6 6 9 4 C8 6 9 7 10 6 C12 4 15 4 17 2z" fill="#ffc23a"/><circle cx="12.5" cy="13" r="5" fill="#7b3fe4"/><circle cx="11.5" cy="12" r="3" fill="#9a5cf0"/><path d="M2 11 C1 17 5 23 12 23.5 C6 21 3 16 5 11z" fill="#e8266d" opacity="0.7"/></svg>
<div class="a" style="left:591px;top:728px;width:48px;height:40px;background:#2b2b2b;"></div>
<svg class="a" style="left:603px;top:736px;" width="24" height="24" viewBox="0 0 24 24"><rect x="7" y="2" width="16" height="20" rx="1" fill="#21a366"/><rect x="7" y="8.5" width="16" height="6.5" fill="#107c41"/><rect x="15" y="2" width="8" height="20" fill="#33c481" opacity="0.8"/><rect x="1" y="6" width="12" height="12" rx="1" fill="#107c41"/><path d="M4 9 L10 15 M10 9 L4 15" stroke="#fff" stroke-width="1.7"/></svg>
<svg class="a" style="left:651px;top:736px;" width="24" height="24" viewBox="0 0 24 24"><path d="M1.5 3 H9 L11 5 H22.5 V20.5 H1.5z" fill="#e8a735"/><path d="M1.5 7.5 H22.5 V20.5 H1.5z" fill="#ffd35c"/><path d="M6 14 H18 V21 H15 V17 H9 V21 H6z" fill="#3b8fd6"/></svg>
<svg class="a" style="left:701px;top:736px;" width="24" height="24" viewBox="0 0 24 24"><rect x="7" y="2" width="16" height="20" rx="1" fill="#2b7cd3"/><rect x="7" y="8" width="16" height="7" fill="#185abd"/><rect x="15" y="2" width="8" height="20" fill="#41a5ee" opacity="0.8"/><rect x="1" y="6" width="12" height="12" rx="1" fill="#185abd"/><text x="2.5" y="16" font-size="10" font-weight="bold" font-family="Liberation Sans" fill="#fff">W</text></svg>
<svg class="a" style="left:750px;top:736px;" width="24" height="24" viewBox="0 0 24 24"><circle cx="12" cy="12" r="11.5" fill="#e34133"/><path d="M12 12 L1.8 6.1 A11.5 11.5 0 0 0 9 23.1z" fill="#34a853"/><path d="M12 12 L9 23.1 A11.5 11.5 0 0 0 22.8 8z" fill="#fbbc05"/><circle cx="12" cy="12" r="5.2" fill="#fff"/><circle cx="12" cy="12" r="4.1" fill="#4285f4"/><circle cx="17" cy="18" r="5" fill="#9aa0a6" stroke="#101010"/></svg>
<svg class="a" style="left:799px;top:736px;" width="24" height="24" viewBox="0 0 24 24"><rect x="1.5" y="1.5" width="21" height="21" rx="3" fill="#c4120a"/><path d="M5.5 17.5 C8 13 10.5 8 11.5 5.5 C12.2 4 13.2 4.8 12.8 6.5 C12.3 9.5 14.5 13 18.5 14 C15.5 13.8 9.5 15 5.5 17.5z" fill="none" stroke="#fff" stroke-width="1.4"/></svg>
<div class="a" style="left:399px;top:766px;width:40px;height:2px;background:#76b9ed;"></div>
<div class="a" style="left:591px;top:766px;width:48px;height:2px;background:#76b9ed;"></div>
<div class="a" style="left:644px;top:766px;width:40px;height:2px;background:#76b9ed;"></div>
<div class="a" style="left:742px;top:766px;width:40px;height:2px;background:#76b9ed;"></div>
<div class="a" style="left:791px;top:766px;width:40px;height:2px;background:#76b9ed;"></div>
<svg class="a" style="left:1116px;top:744px;" width="15" height="9" viewBox="0 0 15 9"><path d="M1 8 L7.5 1.5 L14 8" fill="none" stroke="#fff" stroke-width="1.3"/></svg>
<svg class="a" style="left:1140px;top:740px;" width="16" height="17" viewBox="0 0 16 17"><rect x="2" y="5" width="8" height="7" rx="1.5" fill="none" stroke="#fff" stroke-width="1.2"/><path d="M10 7.5 L14 5.5 V11.5 L10 9.5" fill="none" stroke="#fff" stroke-width="1.2"/><path d="M3 2 C5 0.5 9 0.5 11 2 M3 15 C5 16.5 9 16.5 11 15" fill="none" stroke="#fff"/></svg>
<svg class="a" style="left:1162px;top:740px;" width="18" height="17" viewBox="0 0 18 17"><rect x="4.5" y="1.5" width="13" height="10" fill="none" stroke="#fff" stroke-width="1.1"/><path d="M11 11.5 V15 M7 15.5h8" stroke="#fff" stroke-width="1.1"/><rect x="0.5" y="3.5" width="5" height="4" fill="#101010" stroke="#fff"/><path d="M3 7.5 V14" stroke="#fff"/></svg>
<svg class="a" style="left:1186px;top:740px;" width="18" height="17" viewBox="0 0 18 17"><path d="M1 6 H4 L8 2 V15 L4 11 H1z" fill="none" stroke="#fff" stroke-width="1.1"/><path d="M10.5 6 C11.5 7.5 11.5 9.5 10.5 11 M12.5 4 C14.5 6.5 14.5 10.5 12.5 13 M14.5 2 C17.5 6 17.5 11 14.5 15" fill="none" stroke="#fff" stroke-width="1.1"/></svg>
<div class="a t" style="top:743px;font-size:11px;line-height:11px;color:#fff;left:824.5px;width:800px;text-align:center;transform:scaleX(0.8042);transform-origin:center center;">ESP</div>
<div class="a t" style="top:734px;font-size:11px;line-height:11px;color:#fff;left:874.5px;width:800px;text-align:center;transform:scaleX(0.9809);transform-origin:center center;">08:39</div>
<div class="a t" style="top:752px;font-size:11px;line-height:11px;color:#fff;left:874.8px;width:800px;text-align:center;transform:scaleX(1.0444);transform-origin:center center;">23/11/2023</div>
<svg class="a" style="left:1318px;top:740px;" width="18" height="17" viewBox="0 0 18 17"><path d="M0.7 0.7 H17.3 V12 H11 L9 14.5 L7 12 H0.7z" fill="none" stroke="#fff" stroke-width="1.2"/></svg>
<div class="a" style="left:1355px;top:728px;width:1px;height:40px;background:#555;"></div>
</div></body></html>
